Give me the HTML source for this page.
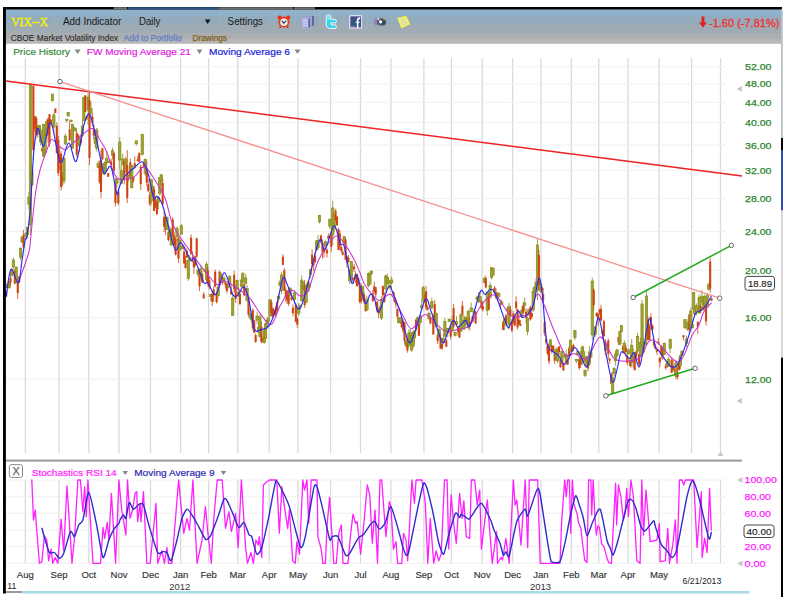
<!DOCTYPE html>
<html><head><meta charset="utf-8">
<style>
html,body{margin:0;padding:0;background:#fff;width:789px;height:597px;overflow:hidden}
svg{display:block}
text{font-family:"Liberation Sans",sans-serif}
.ax{font-size:9.3px;fill:#2f852f;stroke:#2f852f;stroke-width:0.25px}
.sax{font-size:9.7px;fill:#ff22ff;stroke:#ff22ff;stroke-width:0.25px}
.mo{font-size:9.5px;fill:#333;stroke:#333;stroke-width:0.15px}
</style></head><body>
<svg width="789" height="597" viewBox="0 0 789 597">
<defs>
<linearGradient id="tb" x1="0" y1="9.6" x2="0" y2="43.8" gradientUnits="userSpaceOnUse">
<stop offset="0" stop-color="#a6c8e4"/>
<stop offset="0.026" stop-color="#90b2cd"/>
<stop offset="0.18" stop-color="#8fb0ca"/>
<stop offset="0.185" stop-color="#93acbf"/>
<stop offset="0.41" stop-color="#95abbb"/>
<stop offset="0.415" stop-color="#9eaab4"/>
<stop offset="0.68" stop-color="#a1abb3"/>
<stop offset="0.685" stop-color="#aaaeb1"/>
<stop offset="0.85" stop-color="#acaeb0"/>
<stop offset="0.855" stop-color="#b6b6b6"/>
<stop offset="1" stop-color="#b8b8b8"/>
</linearGradient>
</defs>
<rect x="0" y="0" width="789" height="597" fill="#fff"/>
<!-- toolbar -->
<rect x="5" y="9.5" width="776.5" height="34.3" fill="url(#tb)"/>
<rect x="3" y="7" width="779" height="2.6" fill="#000"/>
<rect x="113.6" y="7.2" width="13.4" height="2.2" fill="#707070"/>
<rect x="128" y="7.2" width="90.8" height="2.2" fill="#2a5585"/>
<rect x="218.8" y="7.2" width="74.2" height="2.2" fill="#6c6c6c"/>
<rect x="294" y="7.2" width="21" height="2.2" fill="#6c6c6c"/>
<!-- grid -->
<line x1="25.3" y1="58" x2="25.3" y2="453" stroke="#d9d9d9" stroke-width="1.25"/>
<line x1="25.3" y1="480" x2="25.3" y2="564" stroke="#d9d9d9" stroke-width="1.25"/>
<line x1="59" y1="58" x2="59" y2="453" stroke="#d9d9d9" stroke-width="1.25"/>
<line x1="59" y1="480" x2="59" y2="564" stroke="#d9d9d9" stroke-width="1.25"/>
<line x1="88.8" y1="58" x2="88.8" y2="453" stroke="#d9d9d9" stroke-width="1.25"/>
<line x1="88.8" y1="480" x2="88.8" y2="564" stroke="#d9d9d9" stroke-width="1.25"/>
<line x1="119" y1="58" x2="119" y2="453" stroke="#d9d9d9" stroke-width="1.25"/>
<line x1="119" y1="480" x2="119" y2="564" stroke="#d9d9d9" stroke-width="1.25"/>
<line x1="150.5" y1="58" x2="150.5" y2="453" stroke="#d9d9d9" stroke-width="1.25"/>
<line x1="150.5" y1="480" x2="150.5" y2="564" stroke="#d9d9d9" stroke-width="1.25"/>
<line x1="180.6" y1="58" x2="180.6" y2="453" stroke="#d9d9d9" stroke-width="1.25"/>
<line x1="180.6" y1="480" x2="180.6" y2="564" stroke="#d9d9d9" stroke-width="1.25"/>
<line x1="208.6" y1="58" x2="208.6" y2="453" stroke="#d9d9d9" stroke-width="1.25"/>
<line x1="208.6" y1="480" x2="208.6" y2="564" stroke="#d9d9d9" stroke-width="1.25"/>
<line x1="237.8" y1="58" x2="237.8" y2="453" stroke="#d9d9d9" stroke-width="1.25"/>
<line x1="237.8" y1="480" x2="237.8" y2="564" stroke="#d9d9d9" stroke-width="1.25"/>
<line x1="269.2" y1="58" x2="269.2" y2="453" stroke="#d9d9d9" stroke-width="1.25"/>
<line x1="269.2" y1="480" x2="269.2" y2="564" stroke="#d9d9d9" stroke-width="1.25"/>
<line x1="298" y1="58" x2="298" y2="453" stroke="#d9d9d9" stroke-width="1.25"/>
<line x1="298" y1="480" x2="298" y2="564" stroke="#d9d9d9" stroke-width="1.25"/>
<line x1="330.6" y1="58" x2="330.6" y2="453" stroke="#d9d9d9" stroke-width="1.25"/>
<line x1="330.6" y1="480" x2="330.6" y2="564" stroke="#d9d9d9" stroke-width="1.25"/>
<line x1="360.5" y1="58" x2="360.5" y2="453" stroke="#d9d9d9" stroke-width="1.25"/>
<line x1="360.5" y1="480" x2="360.5" y2="564" stroke="#d9d9d9" stroke-width="1.25"/>
<line x1="390.9" y1="58" x2="390.9" y2="453" stroke="#d9d9d9" stroke-width="1.25"/>
<line x1="390.9" y1="480" x2="390.9" y2="564" stroke="#d9d9d9" stroke-width="1.25"/>
<line x1="423.9" y1="58" x2="423.9" y2="453" stroke="#d9d9d9" stroke-width="1.25"/>
<line x1="423.9" y1="480" x2="423.9" y2="564" stroke="#d9d9d9" stroke-width="1.25"/>
<line x1="451.4" y1="58" x2="451.4" y2="453" stroke="#d9d9d9" stroke-width="1.25"/>
<line x1="451.4" y1="480" x2="451.4" y2="564" stroke="#d9d9d9" stroke-width="1.25"/>
<line x1="482.2" y1="58" x2="482.2" y2="453" stroke="#d9d9d9" stroke-width="1.25"/>
<line x1="482.2" y1="480" x2="482.2" y2="564" stroke="#d9d9d9" stroke-width="1.25"/>
<line x1="512.6" y1="58" x2="512.6" y2="453" stroke="#d9d9d9" stroke-width="1.25"/>
<line x1="512.6" y1="480" x2="512.6" y2="564" stroke="#d9d9d9" stroke-width="1.25"/>
<line x1="541" y1="58" x2="541" y2="453" stroke="#d9d9d9" stroke-width="1.25"/>
<line x1="541" y1="480" x2="541" y2="564" stroke="#d9d9d9" stroke-width="1.25"/>
<line x1="571.3" y1="58" x2="571.3" y2="453" stroke="#d9d9d9" stroke-width="1.25"/>
<line x1="571.3" y1="480" x2="571.3" y2="564" stroke="#d9d9d9" stroke-width="1.25"/>
<line x1="598.8" y1="58" x2="598.8" y2="453" stroke="#d9d9d9" stroke-width="1.25"/>
<line x1="598.8" y1="480" x2="598.8" y2="564" stroke="#d9d9d9" stroke-width="1.25"/>
<line x1="628" y1="58" x2="628" y2="453" stroke="#d9d9d9" stroke-width="1.25"/>
<line x1="628" y1="480" x2="628" y2="564" stroke="#d9d9d9" stroke-width="1.25"/>
<line x1="659.1" y1="58" x2="659.1" y2="453" stroke="#d9d9d9" stroke-width="1.25"/>
<line x1="659.1" y1="480" x2="659.1" y2="564" stroke="#d9d9d9" stroke-width="1.25"/>
<line x1="691.6" y1="58" x2="691.6" y2="453" stroke="#d9d9d9" stroke-width="1.25"/>
<line x1="691.6" y1="480" x2="691.6" y2="564" stroke="#d9d9d9" stroke-width="1.25"/>
<line x1="720.5" y1="58" x2="720.5" y2="453" stroke="#d9d9d9" stroke-width="1.25"/>
<line x1="720.5" y1="480" x2="720.5" y2="564" stroke="#d9d9d9" stroke-width="1.25"/>
<line x1="6" y1="66.7" x2="726" y2="66.7" stroke="#f0f0f0" stroke-width="1"/>
<line x1="6" y1="83.7" x2="726" y2="83.7" stroke="#f0f0f0" stroke-width="1"/>
<line x1="6" y1="102.3" x2="726" y2="102.3" stroke="#f0f0f0" stroke-width="1"/>
<line x1="6" y1="122.6" x2="726" y2="122.6" stroke="#f0f0f0" stroke-width="1"/>
<line x1="6" y1="145.0" x2="726" y2="145.0" stroke="#f0f0f0" stroke-width="1"/>
<line x1="6" y1="170.1" x2="726" y2="170.1" stroke="#f0f0f0" stroke-width="1"/>
<line x1="6" y1="198.6" x2="726" y2="198.6" stroke="#f0f0f0" stroke-width="1"/>
<line x1="6" y1="231.4" x2="726" y2="231.4" stroke="#f0f0f0" stroke-width="1"/>
<line x1="6" y1="270.2" x2="726" y2="270.2" stroke="#f0f0f0" stroke-width="1"/>
<line x1="6" y1="317.8" x2="726" y2="317.8" stroke="#f0f0f0" stroke-width="1"/>
<line x1="6" y1="379.0" x2="726" y2="379.0" stroke="#f0f0f0" stroke-width="1"/>
<line x1="6" y1="480.0" x2="726" y2="480.0" stroke="#f0f0f0" stroke-width="1"/>
<line x1="6" y1="496.7" x2="726" y2="496.7" stroke="#f0f0f0" stroke-width="1"/>
<line x1="6" y1="513.3" x2="726" y2="513.3" stroke="#f0f0f0" stroke-width="1"/>
<line x1="6" y1="530.0" x2="726" y2="530.0" stroke="#f0f0f0" stroke-width="1"/>
<line x1="6" y1="546.6" x2="726" y2="546.6" stroke="#f0f0f0" stroke-width="1"/>
<line x1="6" y1="563.3" x2="726" y2="563.3" stroke="#f0f0f0" stroke-width="1"/>
<!-- candles -->
<g shape-rendering="auto">
<line x1="6.15" y1="290.6" x2="6.15" y2="297.2" stroke="#cf4510" stroke-width="0.8"/>
<rect x="5.10" y="291.1" width="2.1" height="5.4" fill="#cf4510"/>
<line x1="7.60" y1="283.5" x2="7.60" y2="287.8" stroke="#878c16" stroke-width="0.8"/>
<rect x="6.45" y="284.2" width="2.3" height="3.5" fill="#9ea236" stroke="#878c16" stroke-width="0.7"/>
<line x1="9.05" y1="281.3" x2="9.05" y2="288.7" stroke="#878c16" stroke-width="0.8"/>
<rect x="7.90" y="281.9" width="2.3" height="5.9" fill="#9ea236" stroke="#878c16" stroke-width="0.7"/>
<line x1="10.50" y1="272.8" x2="10.50" y2="286.1" stroke="#cf4510" stroke-width="0.8"/>
<rect x="9.45" y="277.8" width="2.1" height="4.8" fill="#cf4510"/>
<line x1="11.95" y1="268.1" x2="11.95" y2="276.7" stroke="#878c16" stroke-width="0.8"/>
<rect x="10.80" y="269.7" width="2.3" height="5.7" fill="#9ea236" stroke="#878c16" stroke-width="0.7"/>
<line x1="13.40" y1="257.7" x2="13.40" y2="268.9" stroke="#878c16" stroke-width="0.8"/>
<rect x="12.25" y="260.0" width="2.3" height="7.0" fill="#9ea236" stroke="#878c16" stroke-width="0.7"/>
<line x1="14.85" y1="268.7" x2="14.85" y2="284.4" stroke="#cf4510" stroke-width="0.8"/>
<rect x="13.80" y="270.7" width="2.1" height="12.8" fill="#cf4510"/>
<line x1="16.30" y1="266.5" x2="16.30" y2="283.3" stroke="#878c16" stroke-width="0.8"/>
<rect x="15.15" y="267.1" width="2.3" height="14.7" fill="#9ea236" stroke="#878c16" stroke-width="0.7"/>
<line x1="17.75" y1="280.8" x2="17.75" y2="299.0" stroke="#cf4510" stroke-width="0.8"/>
<rect x="16.70" y="282.6" width="2.1" height="10.5" fill="#cf4510"/>
<line x1="19.20" y1="275.8" x2="19.20" y2="282.7" stroke="#cf4510" stroke-width="0.8"/>
<rect x="18.15" y="276.5" width="2.1" height="6.1" fill="#cf4510"/>
<line x1="20.65" y1="247.1" x2="20.65" y2="260.5" stroke="#878c16" stroke-width="0.8"/>
<rect x="19.50" y="248.6" width="2.3" height="8.8" fill="#9ea236" stroke="#878c16" stroke-width="0.7"/>
<line x1="22.10" y1="236.9" x2="22.10" y2="242.8" stroke="#878c16" stroke-width="0.8"/>
<rect x="20.95" y="236.9" width="2.3" height="5.1" fill="#9ea236" stroke="#878c16" stroke-width="0.7"/>
<line x1="23.55" y1="229.8" x2="23.55" y2="247.6" stroke="#cf4510" stroke-width="0.8"/>
<rect x="22.50" y="234.8" width="2.1" height="12.6" fill="#cf4510"/>
<line x1="26.03" y1="231.8" x2="26.03" y2="236.8" stroke="#878c16" stroke-width="0.8"/>
<rect x="24.88" y="233.4" width="2.3" height="3.1" fill="#9ea236" stroke="#878c16" stroke-width="0.7"/>
<line x1="27.50" y1="227.2" x2="27.50" y2="237.8" stroke="#878c16" stroke-width="0.8"/>
<rect x="26.35" y="227.3" width="2.3" height="7.4" fill="#9ea236" stroke="#878c16" stroke-width="0.7"/>
<line x1="28.96" y1="192.0" x2="28.96" y2="209.0" stroke="#878c16" stroke-width="0.8"/>
<rect x="27.81" y="196.9" width="2.3" height="7.2" fill="#9ea236" stroke="#878c16" stroke-width="0.7"/>
<line x1="30.43" y1="84.5" x2="30.43" y2="235.0" stroke="#878c16" stroke-width="0.8"/>
<rect x="29.28" y="85.5" width="2.3" height="139.5" fill="#9ea236" stroke="#878c16" stroke-width="0.7"/>
<line x1="31.89" y1="164.5" x2="31.89" y2="185.6" stroke="#878c16" stroke-width="0.8"/>
<rect x="30.74" y="171.7" width="2.3" height="13.3" fill="#9ea236" stroke="#878c16" stroke-width="0.7"/>
<line x1="33.36" y1="84.5" x2="33.36" y2="160.0" stroke="#cf4510" stroke-width="0.8"/>
<rect x="32.31" y="86.0" width="2.1" height="64.0" fill="#cf4510"/>
<line x1="34.82" y1="116.4" x2="34.82" y2="132.0" stroke="#cf4510" stroke-width="0.8"/>
<rect x="33.77" y="116.4" width="2.1" height="12.4" fill="#cf4510"/>
<line x1="36.29" y1="116.1" x2="36.29" y2="136.3" stroke="#cf4510" stroke-width="0.8"/>
<rect x="35.24" y="118.1" width="2.1" height="17.0" fill="#cf4510"/>
<line x1="37.75" y1="125.6" x2="37.75" y2="137.7" stroke="#cf4510" stroke-width="0.8"/>
<rect x="36.70" y="128.2" width="2.1" height="6.1" fill="#cf4510"/>
<line x1="39.22" y1="124.8" x2="39.22" y2="134.0" stroke="#878c16" stroke-width="0.8"/>
<rect x="38.07" y="125.6" width="2.3" height="7.6" fill="#9ea236" stroke="#878c16" stroke-width="0.7"/>
<line x1="40.68" y1="127.6" x2="40.68" y2="145.4" stroke="#878c16" stroke-width="0.8"/>
<rect x="39.53" y="130.5" width="2.3" height="11.4" fill="#9ea236" stroke="#878c16" stroke-width="0.7"/>
<line x1="42.15" y1="146.6" x2="42.15" y2="151.4" stroke="#cf4510" stroke-width="0.8"/>
<rect x="41.10" y="148.8" width="2.1" height="2.4" fill="#cf4510"/>
<line x1="43.62" y1="124.0" x2="43.62" y2="157.0" stroke="#878c16" stroke-width="0.8"/>
<rect x="42.47" y="124.6" width="2.3" height="31.6" fill="#9ea236" stroke="#878c16" stroke-width="0.7"/>
<line x1="45.08" y1="128.8" x2="45.08" y2="153.7" stroke="#878c16" stroke-width="0.8"/>
<rect x="43.93" y="135.2" width="2.3" height="17.5" fill="#9ea236" stroke="#878c16" stroke-width="0.7"/>
<line x1="46.55" y1="119.7" x2="46.55" y2="137.1" stroke="#878c16" stroke-width="0.8"/>
<rect x="45.40" y="121.8" width="2.3" height="13.3" fill="#9ea236" stroke="#878c16" stroke-width="0.7"/>
<line x1="48.01" y1="117.4" x2="48.01" y2="142.7" stroke="#cf4510" stroke-width="0.8"/>
<rect x="46.96" y="119.1" width="2.1" height="15.6" fill="#cf4510"/>
<line x1="49.48" y1="114.0" x2="49.48" y2="146.7" stroke="#cf4510" stroke-width="0.8"/>
<rect x="48.43" y="114.3" width="2.1" height="29.2" fill="#cf4510"/>
<line x1="50.94" y1="119.1" x2="50.94" y2="125.5" stroke="#cf4510" stroke-width="0.8"/>
<rect x="49.89" y="119.8" width="2.1" height="2.3" fill="#cf4510"/>
<line x1="52.41" y1="100.7" x2="52.41" y2="94.9" stroke="#878c16" stroke-width="0.8"/>
<rect x="51.26" y="94.1" width="2.3" height="6.7" fill="#9ea236" stroke="#878c16" stroke-width="0.7"/>
<line x1="53.87" y1="112.9" x2="53.87" y2="132.9" stroke="#878c16" stroke-width="0.8"/>
<rect x="52.72" y="115.0" width="2.3" height="12.0" fill="#9ea236" stroke="#878c16" stroke-width="0.7"/>
<line x1="55.34" y1="113.1" x2="55.34" y2="110.2" stroke="#cf4510" stroke-width="0.8"/>
<rect x="54.29" y="108.5" width="2.1" height="4.6" fill="#cf4510"/>
<line x1="56.80" y1="122.4" x2="56.80" y2="153.5" stroke="#cf4510" stroke-width="0.8"/>
<rect x="55.75" y="125.7" width="2.1" height="27.4" fill="#cf4510"/>
<line x1="58.27" y1="135.8" x2="58.27" y2="175.9" stroke="#cf4510" stroke-width="0.8"/>
<rect x="57.22" y="140.0" width="2.1" height="33.2" fill="#cf4510"/>
<line x1="59.71" y1="147.1" x2="59.71" y2="170.3" stroke="#cf4510" stroke-width="0.8"/>
<rect x="58.66" y="153.7" width="2.1" height="8.8" fill="#cf4510"/>
<line x1="61.13" y1="151.2" x2="61.13" y2="190.4" stroke="#cf4510" stroke-width="0.8"/>
<rect x="60.08" y="153.9" width="2.1" height="33.1" fill="#cf4510"/>
<line x1="62.55" y1="172.3" x2="62.55" y2="185.7" stroke="#cf4510" stroke-width="0.8"/>
<rect x="61.50" y="176.1" width="2.1" height="5.3" fill="#cf4510"/>
<line x1="63.97" y1="157.4" x2="63.97" y2="184.4" stroke="#878c16" stroke-width="0.8"/>
<rect x="62.82" y="158.3" width="2.3" height="22.8" fill="#9ea236" stroke="#878c16" stroke-width="0.7"/>
<line x1="65.39" y1="133.6" x2="65.39" y2="145.0" stroke="#878c16" stroke-width="0.8"/>
<rect x="64.24" y="136.0" width="2.3" height="7.9" fill="#9ea236" stroke="#878c16" stroke-width="0.7"/>
<line x1="66.80" y1="119.2" x2="66.80" y2="122.5" stroke="#878c16" stroke-width="0.8"/>
<rect x="65.65" y="119.2" width="2.3" height="1.2" fill="#9ea236" stroke="#878c16" stroke-width="0.7"/>
<line x1="68.22" y1="116.0" x2="68.22" y2="112.9" stroke="#878c16" stroke-width="0.8"/>
<rect x="67.07" y="112.3" width="2.3" height="3.7" fill="#9ea236" stroke="#878c16" stroke-width="0.7"/>
<line x1="69.64" y1="121.1" x2="69.64" y2="141.3" stroke="#cf4510" stroke-width="0.8"/>
<rect x="68.59" y="129.3" width="2.1" height="10.8" fill="#cf4510"/>
<line x1="71.06" y1="120.7" x2="71.06" y2="122.1" stroke="#878c16" stroke-width="0.8"/>
<rect x="69.91" y="120.1" width="2.3" height="1.2" fill="#9ea236" stroke="#878c16" stroke-width="0.7"/>
<line x1="72.48" y1="124.2" x2="72.48" y2="148.4" stroke="#878c16" stroke-width="0.8"/>
<rect x="71.33" y="124.2" width="2.3" height="24.0" fill="#9ea236" stroke="#878c16" stroke-width="0.7"/>
<line x1="73.90" y1="127.7" x2="73.90" y2="127.6" stroke="#878c16" stroke-width="0.8"/>
<rect x="72.75" y="127.4" width="2.3" height="1.2" fill="#9ea236" stroke="#878c16" stroke-width="0.7"/>
<line x1="75.32" y1="131.1" x2="75.32" y2="130.9" stroke="#878c16" stroke-width="0.8"/>
<rect x="74.17" y="128.4" width="2.3" height="2.7" fill="#9ea236" stroke="#878c16" stroke-width="0.7"/>
<line x1="76.74" y1="130.8" x2="76.74" y2="157.4" stroke="#cf4510" stroke-width="0.8"/>
<rect x="75.69" y="133.1" width="2.1" height="21.5" fill="#cf4510"/>
<line x1="78.16" y1="134.6" x2="78.16" y2="140.1" stroke="#cf4510" stroke-width="0.8"/>
<rect x="77.11" y="134.7" width="2.1" height="3.7" fill="#cf4510"/>
<line x1="79.58" y1="137.3" x2="79.58" y2="152.2" stroke="#878c16" stroke-width="0.8"/>
<rect x="78.43" y="138.9" width="2.3" height="7.0" fill="#9ea236" stroke="#878c16" stroke-width="0.7"/>
<line x1="81.00" y1="134.1" x2="81.00" y2="144.1" stroke="#cf4510" stroke-width="0.8"/>
<rect x="79.95" y="139.0" width="2.1" height="3.8" fill="#cf4510"/>
<line x1="82.41" y1="120.3" x2="82.41" y2="137.7" stroke="#878c16" stroke-width="0.8"/>
<rect x="81.26" y="126.0" width="2.3" height="9.6" fill="#9ea236" stroke="#878c16" stroke-width="0.7"/>
<line x1="83.83" y1="97.3" x2="83.83" y2="121.3" stroke="#878c16" stroke-width="0.8"/>
<rect x="82.68" y="97.3" width="2.3" height="23.4" fill="#9ea236" stroke="#878c16" stroke-width="0.7"/>
<line x1="85.25" y1="95.3" x2="85.25" y2="112.1" stroke="#cf4510" stroke-width="0.8"/>
<rect x="84.20" y="95.3" width="2.1" height="16.7" fill="#cf4510"/>
<line x1="86.67" y1="115.8" x2="86.67" y2="120.1" stroke="#cf4510" stroke-width="0.8"/>
<rect x="85.62" y="116.0" width="2.1" height="2.9" fill="#cf4510"/>
<line x1="88.09" y1="93.0" x2="88.09" y2="125.0" stroke="#878c16" stroke-width="0.8"/>
<rect x="86.94" y="97.0" width="2.3" height="13.0" fill="#9ea236" stroke="#878c16" stroke-width="0.7"/>
<line x1="89.52" y1="90.0" x2="89.52" y2="165.0" stroke="#cf4510" stroke-width="0.8"/>
<rect x="88.47" y="100.0" width="2.1" height="58.0" fill="#cf4510"/>
<line x1="90.96" y1="101.8" x2="90.96" y2="115.1" stroke="#878c16" stroke-width="0.8"/>
<rect x="89.81" y="108.6" width="2.3" height="4.3" fill="#9ea236" stroke="#878c16" stroke-width="0.7"/>
<line x1="92.40" y1="113.1" x2="92.40" y2="126.4" stroke="#cf4510" stroke-width="0.8"/>
<rect x="91.35" y="116.7" width="2.1" height="6.1" fill="#cf4510"/>
<line x1="93.83" y1="124.5" x2="93.83" y2="139.5" stroke="#cf4510" stroke-width="0.8"/>
<rect x="92.78" y="128.8" width="2.1" height="7.0" fill="#cf4510"/>
<line x1="95.27" y1="136.4" x2="95.27" y2="146.9" stroke="#878c16" stroke-width="0.8"/>
<rect x="94.12" y="137.7" width="2.3" height="5.7" fill="#9ea236" stroke="#878c16" stroke-width="0.7"/>
<line x1="96.71" y1="128.0" x2="96.71" y2="151.5" stroke="#878c16" stroke-width="0.8"/>
<rect x="95.56" y="129.9" width="2.3" height="18.2" fill="#9ea236" stroke="#878c16" stroke-width="0.7"/>
<line x1="98.15" y1="160.7" x2="98.15" y2="168.1" stroke="#878c16" stroke-width="0.8"/>
<rect x="97.00" y="163.6" width="2.3" height="3.8" fill="#9ea236" stroke="#878c16" stroke-width="0.7"/>
<line x1="99.59" y1="160.5" x2="99.59" y2="183.8" stroke="#cf4510" stroke-width="0.8"/>
<rect x="98.54" y="165.2" width="2.1" height="16.8" fill="#cf4510"/>
<line x1="101.02" y1="150.0" x2="101.02" y2="198.0" stroke="#cf4510" stroke-width="0.8"/>
<rect x="99.97" y="160.0" width="2.1" height="32.0" fill="#cf4510"/>
<line x1="102.46" y1="147.6" x2="102.46" y2="160.0" stroke="#cf4510" stroke-width="0.8"/>
<rect x="101.41" y="148.3" width="2.1" height="10.8" fill="#cf4510"/>
<line x1="103.90" y1="162.8" x2="103.90" y2="175.0" stroke="#878c16" stroke-width="0.8"/>
<rect x="102.75" y="163.7" width="2.3" height="10.3" fill="#9ea236" stroke="#878c16" stroke-width="0.7"/>
<line x1="105.34" y1="162.0" x2="105.34" y2="173.9" stroke="#878c16" stroke-width="0.8"/>
<rect x="104.19" y="162.1" width="2.3" height="9.3" fill="#9ea236" stroke="#878c16" stroke-width="0.7"/>
<line x1="106.78" y1="151.1" x2="106.78" y2="164.6" stroke="#878c16" stroke-width="0.8"/>
<rect x="105.63" y="158.3" width="2.3" height="4.4" fill="#9ea236" stroke="#878c16" stroke-width="0.7"/>
<line x1="108.21" y1="172.9" x2="108.21" y2="176.7" stroke="#cf4510" stroke-width="0.8"/>
<rect x="107.16" y="173.1" width="2.1" height="3.6" fill="#cf4510"/>
<line x1="109.65" y1="160.6" x2="109.65" y2="162.7" stroke="#878c16" stroke-width="0.8"/>
<rect x="108.50" y="161.0" width="2.3" height="1.7" fill="#9ea236" stroke="#878c16" stroke-width="0.7"/>
<line x1="111.09" y1="158.6" x2="111.09" y2="165.4" stroke="#cf4510" stroke-width="0.8"/>
<rect x="110.04" y="161.6" width="2.1" height="3.4" fill="#cf4510"/>
<line x1="112.53" y1="147.6" x2="112.53" y2="159.5" stroke="#878c16" stroke-width="0.8"/>
<rect x="111.38" y="150.7" width="2.3" height="4.8" fill="#9ea236" stroke="#878c16" stroke-width="0.7"/>
<line x1="113.97" y1="152.8" x2="113.97" y2="174.6" stroke="#cf4510" stroke-width="0.8"/>
<rect x="112.92" y="152.8" width="2.1" height="17.9" fill="#cf4510"/>
<line x1="115.40" y1="178.2" x2="115.40" y2="206.5" stroke="#cf4510" stroke-width="0.8"/>
<rect x="114.35" y="182.2" width="2.1" height="20.9" fill="#cf4510"/>
<line x1="116.84" y1="176.3" x2="116.84" y2="187.6" stroke="#878c16" stroke-width="0.8"/>
<rect x="115.69" y="179.6" width="2.3" height="3.5" fill="#9ea236" stroke="#878c16" stroke-width="0.7"/>
<line x1="118.28" y1="190.7" x2="118.28" y2="205.2" stroke="#cf4510" stroke-width="0.8"/>
<rect x="117.23" y="191.6" width="2.1" height="11.6" fill="#cf4510"/>
<line x1="119.75" y1="137.0" x2="119.75" y2="170.0" stroke="#878c16" stroke-width="0.8"/>
<rect x="118.60" y="142.0" width="2.3" height="18.0" fill="#9ea236" stroke="#878c16" stroke-width="0.7"/>
<line x1="121.25" y1="164.4" x2="121.25" y2="183.4" stroke="#878c16" stroke-width="0.8"/>
<rect x="120.10" y="170.7" width="2.3" height="12.7" fill="#9ea236" stroke="#878c16" stroke-width="0.7"/>
<line x1="122.75" y1="153.6" x2="122.75" y2="165.8" stroke="#878c16" stroke-width="0.8"/>
<rect x="121.60" y="158.9" width="2.3" height="5.0" fill="#9ea236" stroke="#878c16" stroke-width="0.7"/>
<line x1="124.25" y1="159.7" x2="124.25" y2="184.4" stroke="#cf4510" stroke-width="0.8"/>
<rect x="123.20" y="161.3" width="2.1" height="18.5" fill="#cf4510"/>
<line x1="125.75" y1="156.7" x2="125.75" y2="173.2" stroke="#878c16" stroke-width="0.8"/>
<rect x="124.60" y="159.1" width="2.3" height="9.6" fill="#9ea236" stroke="#878c16" stroke-width="0.7"/>
<line x1="127.25" y1="150.0" x2="127.25" y2="203.0" stroke="#cf4510" stroke-width="0.8"/>
<rect x="126.20" y="165.0" width="2.1" height="33.0" fill="#cf4510"/>
<line x1="128.75" y1="174.7" x2="128.75" y2="181.5" stroke="#878c16" stroke-width="0.8"/>
<rect x="127.60" y="175.3" width="2.3" height="1.9" fill="#9ea236" stroke="#878c16" stroke-width="0.7"/>
<line x1="130.25" y1="158.4" x2="130.25" y2="176.6" stroke="#cf4510" stroke-width="0.8"/>
<rect x="129.20" y="162.2" width="2.1" height="13.7" fill="#cf4510"/>
<line x1="131.75" y1="164.9" x2="131.75" y2="188.0" stroke="#878c16" stroke-width="0.8"/>
<rect x="130.60" y="165.5" width="2.3" height="22.3" fill="#9ea236" stroke="#878c16" stroke-width="0.7"/>
<line x1="133.25" y1="176.7" x2="133.25" y2="182.8" stroke="#cf4510" stroke-width="0.8"/>
<rect x="132.20" y="177.0" width="2.1" height="3.8" fill="#cf4510"/>
<line x1="134.75" y1="156.4" x2="134.75" y2="168.7" stroke="#cf4510" stroke-width="0.8"/>
<rect x="133.70" y="163.3" width="2.1" height="4.4" fill="#cf4510"/>
<line x1="136.25" y1="140.2" x2="136.25" y2="145.7" stroke="#878c16" stroke-width="0.8"/>
<rect x="135.10" y="140.9" width="2.3" height="2.8" fill="#9ea236" stroke="#878c16" stroke-width="0.7"/>
<line x1="137.75" y1="155.7" x2="137.75" y2="161.3" stroke="#cf4510" stroke-width="0.8"/>
<rect x="136.70" y="159.4" width="2.1" height="1.7" fill="#cf4510"/>
<line x1="139.25" y1="152.7" x2="139.25" y2="162.0" stroke="#cf4510" stroke-width="0.8"/>
<rect x="138.20" y="152.8" width="2.1" height="9.0" fill="#cf4510"/>
<line x1="140.75" y1="164.8" x2="140.75" y2="190.0" stroke="#cf4510" stroke-width="0.8"/>
<rect x="139.70" y="166.5" width="2.1" height="17.6" fill="#cf4510"/>
<line x1="142.25" y1="134.2" x2="142.25" y2="155.7" stroke="#878c16" stroke-width="0.8"/>
<rect x="141.10" y="134.2" width="2.3" height="20.1" fill="#9ea236" stroke="#878c16" stroke-width="0.7"/>
<line x1="143.75" y1="161.7" x2="143.75" y2="168.1" stroke="#cf4510" stroke-width="0.8"/>
<rect x="142.70" y="163.1" width="2.1" height="3.0" fill="#cf4510"/>
<line x1="145.25" y1="158.4" x2="145.25" y2="175.8" stroke="#878c16" stroke-width="0.8"/>
<rect x="144.10" y="159.6" width="2.3" height="13.7" fill="#9ea236" stroke="#878c16" stroke-width="0.7"/>
<line x1="146.75" y1="161.0" x2="146.75" y2="186.0" stroke="#cf4510" stroke-width="0.8"/>
<rect x="145.70" y="167.7" width="2.1" height="14.8" fill="#cf4510"/>
<line x1="148.25" y1="179.0" x2="148.25" y2="192.4" stroke="#cf4510" stroke-width="0.8"/>
<rect x="147.20" y="184.3" width="2.1" height="6.6" fill="#cf4510"/>
<line x1="149.75" y1="192.5" x2="149.75" y2="206.0" stroke="#cf4510" stroke-width="0.8"/>
<rect x="148.70" y="195.2" width="2.1" height="8.6" fill="#cf4510"/>
<line x1="151.22" y1="179.2" x2="151.22" y2="205.3" stroke="#878c16" stroke-width="0.8"/>
<rect x="150.07" y="179.5" width="2.3" height="21.7" fill="#9ea236" stroke="#878c16" stroke-width="0.7"/>
<line x1="152.65" y1="185.5" x2="152.65" y2="193.6" stroke="#878c16" stroke-width="0.8"/>
<rect x="151.50" y="186.7" width="2.3" height="5.3" fill="#9ea236" stroke="#878c16" stroke-width="0.7"/>
<line x1="154.08" y1="185.7" x2="154.08" y2="211.0" stroke="#cf4510" stroke-width="0.8"/>
<rect x="153.03" y="189.3" width="2.1" height="21.6" fill="#cf4510"/>
<line x1="155.52" y1="198.2" x2="155.52" y2="207.9" stroke="#cf4510" stroke-width="0.8"/>
<rect x="154.47" y="200.3" width="2.1" height="6.5" fill="#cf4510"/>
<line x1="156.95" y1="198.5" x2="156.95" y2="215.3" stroke="#cf4510" stroke-width="0.8"/>
<rect x="155.90" y="201.5" width="2.1" height="12.4" fill="#cf4510"/>
<line x1="158.38" y1="195.9" x2="158.38" y2="209.1" stroke="#878c16" stroke-width="0.8"/>
<rect x="157.23" y="197.4" width="2.3" height="4.6" fill="#9ea236" stroke="#878c16" stroke-width="0.7"/>
<line x1="159.82" y1="176.9" x2="159.82" y2="195.6" stroke="#878c16" stroke-width="0.8"/>
<rect x="158.67" y="177.5" width="2.3" height="16.0" fill="#9ea236" stroke="#878c16" stroke-width="0.7"/>
<line x1="161.25" y1="174.7" x2="161.25" y2="185.8" stroke="#878c16" stroke-width="0.8"/>
<rect x="160.10" y="174.7" width="2.3" height="6.6" fill="#9ea236" stroke="#878c16" stroke-width="0.7"/>
<line x1="162.68" y1="178.8" x2="162.68" y2="204.8" stroke="#cf4510" stroke-width="0.8"/>
<rect x="161.63" y="183.0" width="2.1" height="21.2" fill="#cf4510"/>
<line x1="164.12" y1="211.4" x2="164.12" y2="232.1" stroke="#cf4510" stroke-width="0.8"/>
<rect x="163.07" y="216.8" width="2.1" height="9.7" fill="#cf4510"/>
<line x1="165.55" y1="214.9" x2="165.55" y2="235.2" stroke="#cf4510" stroke-width="0.8"/>
<rect x="164.50" y="218.1" width="2.1" height="11.3" fill="#cf4510"/>
<line x1="166.98" y1="216.6" x2="166.98" y2="229.9" stroke="#878c16" stroke-width="0.8"/>
<rect x="165.83" y="217.5" width="2.3" height="12.2" fill="#9ea236" stroke="#878c16" stroke-width="0.7"/>
<line x1="168.42" y1="231.3" x2="168.42" y2="241.3" stroke="#cf4510" stroke-width="0.8"/>
<rect x="167.37" y="231.8" width="2.1" height="8.2" fill="#cf4510"/>
<line x1="169.85" y1="225.9" x2="169.85" y2="236.7" stroke="#878c16" stroke-width="0.8"/>
<rect x="168.70" y="229.3" width="2.3" height="6.0" fill="#9ea236" stroke="#878c16" stroke-width="0.7"/>
<line x1="171.28" y1="228.2" x2="171.28" y2="245.3" stroke="#878c16" stroke-width="0.8"/>
<rect x="170.13" y="230.9" width="2.3" height="14.2" fill="#9ea236" stroke="#878c16" stroke-width="0.7"/>
<line x1="172.72" y1="217.2" x2="172.72" y2="236.8" stroke="#cf4510" stroke-width="0.8"/>
<rect x="171.67" y="219.5" width="2.1" height="17.0" fill="#cf4510"/>
<line x1="174.15" y1="232.0" x2="174.15" y2="245.4" stroke="#cf4510" stroke-width="0.8"/>
<rect x="173.10" y="235.6" width="2.1" height="9.4" fill="#cf4510"/>
<line x1="175.58" y1="237.0" x2="175.58" y2="255.4" stroke="#cf4510" stroke-width="0.8"/>
<rect x="174.53" y="239.0" width="2.1" height="15.6" fill="#cf4510"/>
<line x1="177.02" y1="226.4" x2="177.02" y2="241.1" stroke="#878c16" stroke-width="0.8"/>
<rect x="175.87" y="228.2" width="2.3" height="8.4" fill="#9ea236" stroke="#878c16" stroke-width="0.7"/>
<line x1="178.45" y1="236.2" x2="178.45" y2="263.2" stroke="#cf4510" stroke-width="0.8"/>
<rect x="177.40" y="238.3" width="2.1" height="20.4" fill="#cf4510"/>
<line x1="179.88" y1="237.0" x2="179.88" y2="250.8" stroke="#878c16" stroke-width="0.8"/>
<rect x="178.73" y="240.5" width="2.3" height="9.4" fill="#9ea236" stroke="#878c16" stroke-width="0.7"/>
<line x1="181.30" y1="224.0" x2="181.30" y2="234.7" stroke="#878c16" stroke-width="0.8"/>
<rect x="180.15" y="225.7" width="2.3" height="8.5" fill="#9ea236" stroke="#878c16" stroke-width="0.7"/>
<line x1="182.70" y1="245.2" x2="182.70" y2="249.0" stroke="#878c16" stroke-width="0.8"/>
<rect x="181.55" y="246.3" width="2.3" height="2.4" fill="#9ea236" stroke="#878c16" stroke-width="0.7"/>
<line x1="184.10" y1="245.4" x2="184.10" y2="263.5" stroke="#cf4510" stroke-width="0.8"/>
<rect x="183.05" y="251.6" width="2.1" height="11.8" fill="#cf4510"/>
<line x1="185.50" y1="255.8" x2="185.50" y2="268.7" stroke="#cf4510" stroke-width="0.8"/>
<rect x="184.45" y="260.3" width="2.1" height="7.7" fill="#cf4510"/>
<line x1="186.90" y1="248.5" x2="186.90" y2="257.7" stroke="#cf4510" stroke-width="0.8"/>
<rect x="185.85" y="251.1" width="2.1" height="6.6" fill="#cf4510"/>
<line x1="188.30" y1="259.3" x2="188.30" y2="280.9" stroke="#878c16" stroke-width="0.8"/>
<rect x="187.15" y="260.1" width="2.3" height="18.5" fill="#9ea236" stroke="#878c16" stroke-width="0.7"/>
<line x1="189.70" y1="255.0" x2="189.70" y2="261.3" stroke="#878c16" stroke-width="0.8"/>
<rect x="188.55" y="258.0" width="2.3" height="2.8" fill="#9ea236" stroke="#878c16" stroke-width="0.7"/>
<line x1="191.10" y1="234.4" x2="191.10" y2="254.6" stroke="#cf4510" stroke-width="0.8"/>
<rect x="190.05" y="237.6" width="2.1" height="16.6" fill="#cf4510"/>
<line x1="192.50" y1="251.4" x2="192.50" y2="262.1" stroke="#cf4510" stroke-width="0.8"/>
<rect x="191.45" y="257.7" width="2.1" height="2.2" fill="#cf4510"/>
<line x1="193.90" y1="259.7" x2="193.90" y2="273.9" stroke="#cf4510" stroke-width="0.8"/>
<rect x="192.85" y="260.8" width="2.1" height="6.6" fill="#cf4510"/>
<line x1="195.30" y1="256.1" x2="195.30" y2="265.9" stroke="#cf4510" stroke-width="0.8"/>
<rect x="194.25" y="256.2" width="2.1" height="9.5" fill="#cf4510"/>
<line x1="196.70" y1="237.7" x2="196.70" y2="256.9" stroke="#cf4510" stroke-width="0.8"/>
<rect x="195.65" y="238.4" width="2.1" height="18.2" fill="#cf4510"/>
<line x1="198.10" y1="269.9" x2="198.10" y2="276.9" stroke="#878c16" stroke-width="0.8"/>
<rect x="196.95" y="269.9" width="2.3" height="4.2" fill="#9ea236" stroke="#878c16" stroke-width="0.7"/>
<line x1="199.50" y1="269.1" x2="199.50" y2="291.1" stroke="#cf4510" stroke-width="0.8"/>
<rect x="198.45" y="269.5" width="2.1" height="16.9" fill="#cf4510"/>
<line x1="200.90" y1="265.2" x2="200.90" y2="280.9" stroke="#878c16" stroke-width="0.8"/>
<rect x="199.75" y="268.7" width="2.3" height="8.8" fill="#9ea236" stroke="#878c16" stroke-width="0.7"/>
<line x1="202.30" y1="273.3" x2="202.30" y2="282.9" stroke="#cf4510" stroke-width="0.8"/>
<rect x="201.25" y="274.0" width="2.1" height="8.6" fill="#cf4510"/>
<line x1="203.70" y1="292.0" x2="203.70" y2="298.5" stroke="#cf4510" stroke-width="0.8"/>
<rect x="202.65" y="294.4" width="2.1" height="4.0" fill="#cf4510"/>
<line x1="205.10" y1="268.0" x2="205.10" y2="272.5" stroke="#878c16" stroke-width="0.8"/>
<rect x="203.95" y="270.1" width="2.3" height="1.7" fill="#9ea236" stroke="#878c16" stroke-width="0.7"/>
<line x1="206.50" y1="261.6" x2="206.50" y2="282.5" stroke="#878c16" stroke-width="0.8"/>
<rect x="205.35" y="264.2" width="2.3" height="15.2" fill="#9ea236" stroke="#878c16" stroke-width="0.7"/>
<line x1="207.90" y1="266.6" x2="207.90" y2="286.3" stroke="#cf4510" stroke-width="0.8"/>
<rect x="206.85" y="270.1" width="2.1" height="13.1" fill="#cf4510"/>
<line x1="209.33" y1="277.2" x2="209.33" y2="289.4" stroke="#cf4510" stroke-width="0.8"/>
<rect x="208.28" y="280.3" width="2.1" height="6.9" fill="#cf4510"/>
<line x1="210.79" y1="293.8" x2="210.79" y2="301.2" stroke="#878c16" stroke-width="0.8"/>
<rect x="209.64" y="294.4" width="2.3" height="2.1" fill="#9ea236" stroke="#878c16" stroke-width="0.7"/>
<line x1="212.25" y1="291.4" x2="212.25" y2="306.2" stroke="#cf4510" stroke-width="0.8"/>
<rect x="211.20" y="293.9" width="2.1" height="7.9" fill="#cf4510"/>
<line x1="213.71" y1="286.4" x2="213.71" y2="301.9" stroke="#cf4510" stroke-width="0.8"/>
<rect x="212.66" y="289.5" width="2.1" height="6.1" fill="#cf4510"/>
<line x1="215.17" y1="269.4" x2="215.17" y2="287.2" stroke="#cf4510" stroke-width="0.8"/>
<rect x="214.12" y="271.7" width="2.1" height="14.9" fill="#cf4510"/>
<line x1="216.63" y1="291.5" x2="216.63" y2="303.5" stroke="#cf4510" stroke-width="0.8"/>
<rect x="215.58" y="293.1" width="2.1" height="9.2" fill="#cf4510"/>
<line x1="218.09" y1="283.8" x2="218.09" y2="297.9" stroke="#878c16" stroke-width="0.8"/>
<rect x="216.94" y="287.4" width="2.3" height="8.3" fill="#9ea236" stroke="#878c16" stroke-width="0.7"/>
<line x1="219.55" y1="270.6" x2="219.55" y2="287.5" stroke="#cf4510" stroke-width="0.8"/>
<rect x="218.50" y="271.7" width="2.1" height="13.8" fill="#cf4510"/>
<line x1="221.01" y1="272.2" x2="221.01" y2="278.7" stroke="#878c16" stroke-width="0.8"/>
<rect x="219.86" y="274.6" width="2.3" height="2.6" fill="#9ea236" stroke="#878c16" stroke-width="0.7"/>
<line x1="222.47" y1="276.7" x2="222.47" y2="284.8" stroke="#cf4510" stroke-width="0.8"/>
<rect x="221.42" y="277.8" width="2.1" height="4.6" fill="#cf4510"/>
<line x1="223.93" y1="275.6" x2="223.93" y2="283.1" stroke="#878c16" stroke-width="0.8"/>
<rect x="222.78" y="278.2" width="2.3" height="3.9" fill="#9ea236" stroke="#878c16" stroke-width="0.7"/>
<line x1="225.39" y1="281.3" x2="225.39" y2="288.6" stroke="#cf4510" stroke-width="0.8"/>
<rect x="224.34" y="282.9" width="2.1" height="1.8" fill="#cf4510"/>
<line x1="226.85" y1="282.5" x2="226.85" y2="293.3" stroke="#cf4510" stroke-width="0.8"/>
<rect x="225.80" y="283.8" width="2.1" height="7.2" fill="#cf4510"/>
<line x1="228.31" y1="280.1" x2="228.31" y2="288.3" stroke="#878c16" stroke-width="0.8"/>
<rect x="227.16" y="284.2" width="2.3" height="2.9" fill="#9ea236" stroke="#878c16" stroke-width="0.7"/>
<line x1="229.77" y1="275.0" x2="229.77" y2="284.4" stroke="#878c16" stroke-width="0.8"/>
<rect x="228.62" y="276.7" width="2.3" height="7.7" fill="#9ea236" stroke="#878c16" stroke-width="0.7"/>
<line x1="231.23" y1="285.3" x2="231.23" y2="294.6" stroke="#cf4510" stroke-width="0.8"/>
<rect x="230.18" y="290.8" width="2.1" height="3.6" fill="#cf4510"/>
<line x1="232.69" y1="294.7" x2="232.69" y2="315.8" stroke="#878c16" stroke-width="0.8"/>
<rect x="231.54" y="298.2" width="2.3" height="17.2" fill="#9ea236" stroke="#878c16" stroke-width="0.7"/>
<line x1="234.15" y1="270.7" x2="234.15" y2="292.4" stroke="#cf4510" stroke-width="0.8"/>
<rect x="233.10" y="274.8" width="2.1" height="14.3" fill="#cf4510"/>
<line x1="235.61" y1="285.0" x2="235.61" y2="302.8" stroke="#cf4510" stroke-width="0.8"/>
<rect x="234.56" y="288.2" width="2.1" height="10.7" fill="#cf4510"/>
<line x1="237.07" y1="279.4" x2="237.07" y2="289.5" stroke="#878c16" stroke-width="0.8"/>
<rect x="235.92" y="280.6" width="2.3" height="8.1" fill="#9ea236" stroke="#878c16" stroke-width="0.7"/>
<line x1="238.51" y1="287.6" x2="238.51" y2="297.1" stroke="#878c16" stroke-width="0.8"/>
<rect x="237.36" y="292.3" width="2.3" height="3.2" fill="#9ea236" stroke="#878c16" stroke-width="0.7"/>
<line x1="239.94" y1="290.1" x2="239.94" y2="305.1" stroke="#cf4510" stroke-width="0.8"/>
<rect x="238.89" y="294.1" width="2.1" height="9.9" fill="#cf4510"/>
<line x1="241.37" y1="278.2" x2="241.37" y2="288.6" stroke="#878c16" stroke-width="0.8"/>
<rect x="240.22" y="280.0" width="2.3" height="6.3" fill="#9ea236" stroke="#878c16" stroke-width="0.7"/>
<line x1="242.80" y1="272.7" x2="242.80" y2="286.1" stroke="#878c16" stroke-width="0.8"/>
<rect x="241.65" y="273.1" width="2.3" height="8.7" fill="#9ea236" stroke="#878c16" stroke-width="0.7"/>
<line x1="244.22" y1="283.3" x2="244.22" y2="296.2" stroke="#cf4510" stroke-width="0.8"/>
<rect x="243.17" y="284.6" width="2.1" height="10.8" fill="#cf4510"/>
<line x1="245.65" y1="273.9" x2="245.65" y2="284.4" stroke="#878c16" stroke-width="0.8"/>
<rect x="244.50" y="278.0" width="2.3" height="5.4" fill="#9ea236" stroke="#878c16" stroke-width="0.7"/>
<line x1="247.08" y1="285.0" x2="247.08" y2="301.5" stroke="#878c16" stroke-width="0.8"/>
<rect x="245.93" y="288.3" width="2.3" height="12.2" fill="#9ea236" stroke="#878c16" stroke-width="0.7"/>
<line x1="248.50" y1="295.0" x2="248.50" y2="315.0" stroke="#cf4510" stroke-width="0.8"/>
<rect x="247.45" y="299.8" width="2.1" height="15.0" fill="#cf4510"/>
<line x1="249.93" y1="308.5" x2="249.93" y2="318.8" stroke="#878c16" stroke-width="0.8"/>
<rect x="248.78" y="314.5" width="2.3" height="2.8" fill="#9ea236" stroke="#878c16" stroke-width="0.7"/>
<line x1="251.36" y1="313.4" x2="251.36" y2="322.7" stroke="#878c16" stroke-width="0.8"/>
<rect x="250.21" y="316.4" width="2.3" height="3.0" fill="#9ea236" stroke="#878c16" stroke-width="0.7"/>
<line x1="252.79" y1="308.0" x2="252.79" y2="330.5" stroke="#cf4510" stroke-width="0.8"/>
<rect x="251.74" y="310.2" width="2.1" height="18.0" fill="#cf4510"/>
<line x1="254.21" y1="319.9" x2="254.21" y2="333.2" stroke="#cf4510" stroke-width="0.8"/>
<rect x="253.16" y="320.3" width="2.1" height="12.3" fill="#cf4510"/>
<line x1="255.64" y1="333.5" x2="255.64" y2="342.9" stroke="#cf4510" stroke-width="0.8"/>
<rect x="254.59" y="335.0" width="2.1" height="6.9" fill="#cf4510"/>
<line x1="257.07" y1="312.1" x2="257.07" y2="324.1" stroke="#878c16" stroke-width="0.8"/>
<rect x="255.92" y="316.0" width="2.3" height="4.1" fill="#9ea236" stroke="#878c16" stroke-width="0.7"/>
<line x1="258.50" y1="323.3" x2="258.50" y2="332.2" stroke="#878c16" stroke-width="0.8"/>
<rect x="257.35" y="327.6" width="2.3" height="4.5" fill="#9ea236" stroke="#878c16" stroke-width="0.7"/>
<line x1="259.92" y1="314.3" x2="259.92" y2="337.7" stroke="#878c16" stroke-width="0.8"/>
<rect x="258.77" y="316.8" width="2.3" height="19.8" fill="#9ea236" stroke="#878c16" stroke-width="0.7"/>
<line x1="261.35" y1="321.3" x2="261.35" y2="343.2" stroke="#cf4510" stroke-width="0.8"/>
<rect x="260.30" y="326.7" width="2.1" height="15.1" fill="#cf4510"/>
<line x1="262.78" y1="336.7" x2="262.78" y2="342.7" stroke="#cf4510" stroke-width="0.8"/>
<rect x="261.73" y="338.0" width="2.1" height="2.8" fill="#cf4510"/>
<line x1="264.20" y1="327.5" x2="264.20" y2="343.9" stroke="#878c16" stroke-width="0.8"/>
<rect x="263.05" y="330.8" width="2.3" height="11.8" fill="#9ea236" stroke="#878c16" stroke-width="0.7"/>
<line x1="265.63" y1="323.6" x2="265.63" y2="338.6" stroke="#878c16" stroke-width="0.8"/>
<rect x="264.48" y="323.8" width="2.3" height="14.8" fill="#9ea236" stroke="#878c16" stroke-width="0.7"/>
<line x1="267.06" y1="316.7" x2="267.06" y2="328.7" stroke="#878c16" stroke-width="0.8"/>
<rect x="265.91" y="320.2" width="2.3" height="6.7" fill="#9ea236" stroke="#878c16" stroke-width="0.7"/>
<line x1="268.49" y1="316.6" x2="268.49" y2="321.8" stroke="#878c16" stroke-width="0.8"/>
<rect x="267.34" y="318.7" width="2.3" height="2.4" fill="#9ea236" stroke="#878c16" stroke-width="0.7"/>
<line x1="269.92" y1="299.3" x2="269.92" y2="318.3" stroke="#878c16" stroke-width="0.8"/>
<rect x="268.77" y="299.9" width="2.3" height="15.9" fill="#9ea236" stroke="#878c16" stroke-width="0.7"/>
<line x1="271.36" y1="299.6" x2="271.36" y2="316.2" stroke="#cf4510" stroke-width="0.8"/>
<rect x="270.31" y="302.2" width="2.1" height="11.0" fill="#cf4510"/>
<line x1="272.80" y1="307.5" x2="272.80" y2="317.3" stroke="#cf4510" stroke-width="0.8"/>
<rect x="271.75" y="308.3" width="2.1" height="8.6" fill="#cf4510"/>
<line x1="274.24" y1="309.9" x2="274.24" y2="315.2" stroke="#cf4510" stroke-width="0.8"/>
<rect x="273.19" y="310.0" width="2.1" height="4.8" fill="#cf4510"/>
<line x1="275.68" y1="305.9" x2="275.68" y2="317.2" stroke="#cf4510" stroke-width="0.8"/>
<rect x="274.63" y="308.8" width="2.1" height="6.4" fill="#cf4510"/>
<line x1="277.12" y1="301.9" x2="277.12" y2="311.7" stroke="#cf4510" stroke-width="0.8"/>
<rect x="276.07" y="302.2" width="2.1" height="8.7" fill="#cf4510"/>
<line x1="278.56" y1="293.4" x2="278.56" y2="302.5" stroke="#878c16" stroke-width="0.8"/>
<rect x="277.41" y="296.3" width="2.3" height="2.6" fill="#9ea236" stroke="#878c16" stroke-width="0.7"/>
<line x1="280.00" y1="280.2" x2="280.00" y2="286.7" stroke="#878c16" stroke-width="0.8"/>
<rect x="278.85" y="282.0" width="2.3" height="3.6" fill="#9ea236" stroke="#878c16" stroke-width="0.7"/>
<line x1="281.44" y1="272.1" x2="281.44" y2="294.3" stroke="#878c16" stroke-width="0.8"/>
<rect x="280.29" y="274.9" width="2.3" height="16.0" fill="#9ea236" stroke="#878c16" stroke-width="0.7"/>
<line x1="282.88" y1="254.3" x2="282.88" y2="265.1" stroke="#cf4510" stroke-width="0.8"/>
<rect x="281.83" y="256.7" width="2.1" height="8.1" fill="#cf4510"/>
<line x1="284.32" y1="267.9" x2="284.32" y2="290.9" stroke="#cf4510" stroke-width="0.8"/>
<rect x="283.27" y="270.3" width="2.1" height="20.4" fill="#cf4510"/>
<line x1="285.76" y1="287.4" x2="285.76" y2="302.1" stroke="#cf4510" stroke-width="0.8"/>
<rect x="284.71" y="290.4" width="2.1" height="6.9" fill="#cf4510"/>
<line x1="287.20" y1="290.0" x2="287.20" y2="304.1" stroke="#cf4510" stroke-width="0.8"/>
<rect x="286.15" y="291.6" width="2.1" height="8.9" fill="#cf4510"/>
<line x1="288.64" y1="287.9" x2="288.64" y2="306.1" stroke="#cf4510" stroke-width="0.8"/>
<rect x="287.59" y="290.0" width="2.1" height="13.9" fill="#cf4510"/>
<line x1="290.08" y1="287.2" x2="290.08" y2="296.5" stroke="#878c16" stroke-width="0.8"/>
<rect x="288.93" y="288.1" width="2.3" height="7.7" fill="#9ea236" stroke="#878c16" stroke-width="0.7"/>
<line x1="291.52" y1="294.8" x2="291.52" y2="300.8" stroke="#cf4510" stroke-width="0.8"/>
<rect x="290.47" y="297.4" width="2.1" height="2.4" fill="#cf4510"/>
<line x1="292.96" y1="304.4" x2="292.96" y2="316.1" stroke="#cf4510" stroke-width="0.8"/>
<rect x="291.91" y="307.7" width="2.1" height="5.4" fill="#cf4510"/>
<line x1="294.40" y1="290.7" x2="294.40" y2="304.0" stroke="#878c16" stroke-width="0.8"/>
<rect x="293.25" y="293.1" width="2.3" height="6.5" fill="#9ea236" stroke="#878c16" stroke-width="0.7"/>
<line x1="295.84" y1="303.2" x2="295.84" y2="322.2" stroke="#cf4510" stroke-width="0.8"/>
<rect x="294.79" y="304.6" width="2.1" height="17.2" fill="#cf4510"/>
<line x1="297.28" y1="317.1" x2="297.28" y2="327.9" stroke="#cf4510" stroke-width="0.8"/>
<rect x="296.23" y="318.9" width="2.1" height="5.6" fill="#cf4510"/>
<line x1="298.74" y1="303.2" x2="298.74" y2="316.1" stroke="#878c16" stroke-width="0.8"/>
<rect x="297.59" y="307.6" width="2.3" height="5.9" fill="#9ea236" stroke="#878c16" stroke-width="0.7"/>
<line x1="300.22" y1="305.0" x2="300.22" y2="309.7" stroke="#878c16" stroke-width="0.8"/>
<rect x="299.07" y="305.1" width="2.3" height="2.5" fill="#9ea236" stroke="#878c16" stroke-width="0.7"/>
<line x1="301.70" y1="275.1" x2="301.70" y2="300.9" stroke="#878c16" stroke-width="0.8"/>
<rect x="300.55" y="280.1" width="2.3" height="20.8" fill="#9ea236" stroke="#878c16" stroke-width="0.7"/>
<line x1="303.19" y1="281.5" x2="303.19" y2="291.3" stroke="#878c16" stroke-width="0.8"/>
<rect x="302.04" y="281.9" width="2.3" height="6.9" fill="#9ea236" stroke="#878c16" stroke-width="0.7"/>
<line x1="304.67" y1="279.9" x2="304.67" y2="307.9" stroke="#cf4510" stroke-width="0.8"/>
<rect x="303.62" y="284.9" width="2.1" height="20.3" fill="#cf4510"/>
<line x1="306.15" y1="285.0" x2="306.15" y2="302.6" stroke="#878c16" stroke-width="0.8"/>
<rect x="305.00" y="285.3" width="2.3" height="17.2" fill="#9ea236" stroke="#878c16" stroke-width="0.7"/>
<line x1="307.63" y1="280.8" x2="307.63" y2="291.3" stroke="#878c16" stroke-width="0.8"/>
<rect x="306.48" y="283.7" width="2.3" height="7.5" fill="#9ea236" stroke="#878c16" stroke-width="0.7"/>
<line x1="309.11" y1="282.0" x2="309.11" y2="291.5" stroke="#878c16" stroke-width="0.8"/>
<rect x="307.96" y="283.1" width="2.3" height="4.3" fill="#9ea236" stroke="#878c16" stroke-width="0.7"/>
<line x1="310.60" y1="268.5" x2="310.60" y2="278.3" stroke="#878c16" stroke-width="0.8"/>
<rect x="309.45" y="269.7" width="2.3" height="4.6" fill="#9ea236" stroke="#878c16" stroke-width="0.7"/>
<line x1="312.08" y1="249.3" x2="312.08" y2="267.5" stroke="#cf4510" stroke-width="0.8"/>
<rect x="311.03" y="254.6" width="2.1" height="9.3" fill="#cf4510"/>
<line x1="313.56" y1="262.1" x2="313.56" y2="271.2" stroke="#cf4510" stroke-width="0.8"/>
<rect x="312.51" y="262.7" width="2.1" height="2.6" fill="#cf4510"/>
<line x1="315.04" y1="252.0" x2="315.04" y2="263.0" stroke="#cf4510" stroke-width="0.8"/>
<rect x="313.99" y="255.9" width="2.1" height="6.3" fill="#cf4510"/>
<line x1="316.52" y1="240.1" x2="316.52" y2="251.1" stroke="#878c16" stroke-width="0.8"/>
<rect x="315.37" y="240.9" width="2.3" height="8.8" fill="#9ea236" stroke="#878c16" stroke-width="0.7"/>
<line x1="318.00" y1="235.1" x2="318.00" y2="249.6" stroke="#878c16" stroke-width="0.8"/>
<rect x="316.85" y="240.3" width="2.3" height="7.5" fill="#9ea236" stroke="#878c16" stroke-width="0.7"/>
<line x1="319.49" y1="215.3" x2="319.49" y2="223.6" stroke="#878c16" stroke-width="0.8"/>
<rect x="318.34" y="215.4" width="2.3" height="6.4" fill="#9ea236" stroke="#878c16" stroke-width="0.7"/>
<line x1="320.97" y1="234.3" x2="320.97" y2="243.7" stroke="#cf4510" stroke-width="0.8"/>
<rect x="319.92" y="235.7" width="2.1" height="6.3" fill="#cf4510"/>
<line x1="322.45" y1="239.4" x2="322.45" y2="258.6" stroke="#cf4510" stroke-width="0.8"/>
<rect x="321.40" y="242.7" width="2.1" height="9.0" fill="#cf4510"/>
<line x1="323.93" y1="243.3" x2="323.93" y2="257.7" stroke="#cf4510" stroke-width="0.8"/>
<rect x="322.88" y="249.9" width="2.1" height="2.7" fill="#cf4510"/>
<line x1="325.41" y1="240.5" x2="325.41" y2="246.7" stroke="#878c16" stroke-width="0.8"/>
<rect x="324.26" y="241.6" width="2.3" height="4.2" fill="#9ea236" stroke="#878c16" stroke-width="0.7"/>
<line x1="326.90" y1="248.5" x2="326.90" y2="257.5" stroke="#cf4510" stroke-width="0.8"/>
<rect x="325.85" y="249.7" width="2.1" height="3.7" fill="#cf4510"/>
<line x1="328.38" y1="233.2" x2="328.38" y2="240.4" stroke="#cf4510" stroke-width="0.8"/>
<rect x="327.33" y="235.9" width="2.1" height="2.8" fill="#cf4510"/>
<line x1="329.86" y1="219.0" x2="329.86" y2="229.0" stroke="#878c16" stroke-width="0.8"/>
<rect x="328.71" y="219.1" width="2.3" height="7.1" fill="#9ea236" stroke="#878c16" stroke-width="0.7"/>
<line x1="331.31" y1="231.6" x2="331.31" y2="251.9" stroke="#cf4510" stroke-width="0.8"/>
<rect x="330.26" y="233.6" width="2.1" height="13.2" fill="#cf4510"/>
<line x1="332.74" y1="201.0" x2="332.74" y2="245.0" stroke="#878c16" stroke-width="0.8"/>
<rect x="331.59" y="208.0" width="2.3" height="27.0" fill="#9ea236" stroke="#878c16" stroke-width="0.7"/>
<line x1="334.16" y1="214.0" x2="334.16" y2="231.8" stroke="#878c16" stroke-width="0.8"/>
<rect x="333.01" y="214.0" width="2.3" height="14.9" fill="#9ea236" stroke="#878c16" stroke-width="0.7"/>
<line x1="335.58" y1="208.8" x2="335.58" y2="220.8" stroke="#cf4510" stroke-width="0.8"/>
<rect x="334.53" y="210.7" width="2.1" height="9.4" fill="#cf4510"/>
<line x1="337.01" y1="215.8" x2="337.01" y2="225.5" stroke="#cf4510" stroke-width="0.8"/>
<rect x="335.96" y="216.6" width="2.1" height="8.8" fill="#cf4510"/>
<line x1="338.43" y1="227.9" x2="338.43" y2="250.1" stroke="#cf4510" stroke-width="0.8"/>
<rect x="337.38" y="229.3" width="2.1" height="20.6" fill="#cf4510"/>
<line x1="339.85" y1="230.0" x2="339.85" y2="250.3" stroke="#cf4510" stroke-width="0.8"/>
<rect x="338.80" y="233.8" width="2.1" height="12.7" fill="#cf4510"/>
<line x1="341.28" y1="245.7" x2="341.28" y2="253.0" stroke="#cf4510" stroke-width="0.8"/>
<rect x="340.23" y="247.0" width="2.1" height="3.7" fill="#cf4510"/>
<line x1="342.70" y1="249.9" x2="342.70" y2="255.4" stroke="#cf4510" stroke-width="0.8"/>
<rect x="341.65" y="252.2" width="2.1" height="2.5" fill="#cf4510"/>
<line x1="344.13" y1="235.9" x2="344.13" y2="245.4" stroke="#878c16" stroke-width="0.8"/>
<rect x="342.98" y="236.8" width="2.3" height="6.3" fill="#9ea236" stroke="#878c16" stroke-width="0.7"/>
<line x1="345.55" y1="237.5" x2="345.55" y2="259.9" stroke="#cf4510" stroke-width="0.8"/>
<rect x="344.50" y="239.6" width="2.1" height="20.0" fill="#cf4510"/>
<line x1="346.97" y1="255.9" x2="346.97" y2="267.7" stroke="#cf4510" stroke-width="0.8"/>
<rect x="345.92" y="256.8" width="2.1" height="6.3" fill="#cf4510"/>
<line x1="348.40" y1="255.0" x2="348.40" y2="262.4" stroke="#cf4510" stroke-width="0.8"/>
<rect x="347.35" y="257.8" width="2.1" height="4.1" fill="#cf4510"/>
<line x1="349.82" y1="269.1" x2="349.82" y2="284.0" stroke="#878c16" stroke-width="0.8"/>
<rect x="348.67" y="270.1" width="2.3" height="10.9" fill="#9ea236" stroke="#878c16" stroke-width="0.7"/>
<line x1="351.25" y1="261.0" x2="351.25" y2="279.1" stroke="#878c16" stroke-width="0.8"/>
<rect x="350.10" y="261.3" width="2.3" height="15.4" fill="#9ea236" stroke="#878c16" stroke-width="0.7"/>
<line x1="352.67" y1="277.2" x2="352.67" y2="281.8" stroke="#cf4510" stroke-width="0.8"/>
<rect x="351.62" y="277.6" width="2.1" height="2.2" fill="#cf4510"/>
<line x1="354.09" y1="263.7" x2="354.09" y2="272.0" stroke="#cf4510" stroke-width="0.8"/>
<rect x="353.04" y="266.5" width="2.1" height="2.8" fill="#cf4510"/>
<line x1="355.52" y1="271.4" x2="355.52" y2="283.0" stroke="#cf4510" stroke-width="0.8"/>
<rect x="354.47" y="274.3" width="2.1" height="4.0" fill="#cf4510"/>
<line x1="356.94" y1="273.5" x2="356.94" y2="286.3" stroke="#cf4510" stroke-width="0.8"/>
<rect x="355.89" y="274.0" width="2.1" height="12.3" fill="#cf4510"/>
<line x1="358.36" y1="277.4" x2="358.36" y2="285.6" stroke="#cf4510" stroke-width="0.8"/>
<rect x="357.31" y="278.7" width="2.1" height="5.6" fill="#cf4510"/>
<line x1="359.79" y1="284.8" x2="359.79" y2="303.4" stroke="#cf4510" stroke-width="0.8"/>
<rect x="358.74" y="285.3" width="2.1" height="16.8" fill="#cf4510"/>
<line x1="361.22" y1="283.0" x2="361.22" y2="303.5" stroke="#cf4510" stroke-width="0.8"/>
<rect x="360.17" y="286.9" width="2.1" height="14.1" fill="#cf4510"/>
<line x1="362.67" y1="286.1" x2="362.67" y2="300.2" stroke="#878c16" stroke-width="0.8"/>
<rect x="361.52" y="286.2" width="2.3" height="11.4" fill="#9ea236" stroke="#878c16" stroke-width="0.7"/>
<line x1="364.12" y1="292.2" x2="364.12" y2="304.2" stroke="#cf4510" stroke-width="0.8"/>
<rect x="363.07" y="294.3" width="2.1" height="7.8" fill="#cf4510"/>
<line x1="365.57" y1="298.3" x2="365.57" y2="311.3" stroke="#cf4510" stroke-width="0.8"/>
<rect x="364.52" y="301.9" width="2.1" height="9.4" fill="#cf4510"/>
<line x1="367.01" y1="296.1" x2="367.01" y2="311.0" stroke="#878c16" stroke-width="0.8"/>
<rect x="365.86" y="300.0" width="2.3" height="9.7" fill="#9ea236" stroke="#878c16" stroke-width="0.7"/>
<line x1="368.46" y1="272.6" x2="368.46" y2="287.3" stroke="#878c16" stroke-width="0.8"/>
<rect x="367.31" y="273.5" width="2.3" height="12.2" fill="#9ea236" stroke="#878c16" stroke-width="0.7"/>
<line x1="369.91" y1="271.8" x2="369.91" y2="284.8" stroke="#878c16" stroke-width="0.8"/>
<rect x="368.76" y="274.2" width="2.3" height="9.8" fill="#9ea236" stroke="#878c16" stroke-width="0.7"/>
<line x1="371.36" y1="271.0" x2="371.36" y2="274.6" stroke="#878c16" stroke-width="0.8"/>
<rect x="370.21" y="271.0" width="2.3" height="2.8" fill="#9ea236" stroke="#878c16" stroke-width="0.7"/>
<line x1="372.80" y1="289.8" x2="372.80" y2="301.5" stroke="#cf4510" stroke-width="0.8"/>
<rect x="371.75" y="293.3" width="2.1" height="7.8" fill="#cf4510"/>
<line x1="374.25" y1="281.6" x2="374.25" y2="293.3" stroke="#cf4510" stroke-width="0.8"/>
<rect x="373.20" y="286.6" width="2.1" height="5.1" fill="#cf4510"/>
<line x1="375.70" y1="286.7" x2="375.70" y2="297.3" stroke="#cf4510" stroke-width="0.8"/>
<rect x="374.65" y="287.2" width="2.1" height="7.3" fill="#cf4510"/>
<line x1="377.15" y1="300.8" x2="377.15" y2="312.5" stroke="#cf4510" stroke-width="0.8"/>
<rect x="376.10" y="301.7" width="2.1" height="9.0" fill="#cf4510"/>
<line x1="378.60" y1="308.4" x2="378.60" y2="318.2" stroke="#cf4510" stroke-width="0.8"/>
<rect x="377.55" y="309.4" width="2.1" height="4.0" fill="#cf4510"/>
<line x1="380.04" y1="305.2" x2="380.04" y2="315.0" stroke="#878c16" stroke-width="0.8"/>
<rect x="378.89" y="307.6" width="2.3" height="2.5" fill="#9ea236" stroke="#878c16" stroke-width="0.7"/>
<line x1="381.49" y1="296.5" x2="381.49" y2="320.2" stroke="#878c16" stroke-width="0.8"/>
<rect x="380.34" y="299.5" width="2.3" height="18.6" fill="#9ea236" stroke="#878c16" stroke-width="0.7"/>
<line x1="382.94" y1="285.3" x2="382.94" y2="298.6" stroke="#cf4510" stroke-width="0.8"/>
<rect x="381.89" y="286.3" width="2.1" height="8.9" fill="#cf4510"/>
<line x1="384.39" y1="292.2" x2="384.39" y2="302.7" stroke="#cf4510" stroke-width="0.8"/>
<rect x="383.34" y="296.9" width="2.1" height="4.8" fill="#cf4510"/>
<line x1="385.83" y1="274.9" x2="385.83" y2="291.9" stroke="#878c16" stroke-width="0.8"/>
<rect x="384.68" y="275.8" width="2.3" height="13.2" fill="#9ea236" stroke="#878c16" stroke-width="0.7"/>
<line x1="387.28" y1="273.7" x2="387.28" y2="283.9" stroke="#878c16" stroke-width="0.8"/>
<rect x="386.13" y="277.3" width="2.3" height="5.1" fill="#9ea236" stroke="#878c16" stroke-width="0.7"/>
<line x1="388.73" y1="276.9" x2="388.73" y2="286.2" stroke="#878c16" stroke-width="0.8"/>
<rect x="387.58" y="280.7" width="2.3" height="2.6" fill="#9ea236" stroke="#878c16" stroke-width="0.7"/>
<line x1="390.18" y1="282.8" x2="390.18" y2="289.8" stroke="#878c16" stroke-width="0.8"/>
<rect x="389.03" y="285.7" width="2.3" height="2.1" fill="#9ea236" stroke="#878c16" stroke-width="0.7"/>
<line x1="391.62" y1="276.6" x2="391.62" y2="284.8" stroke="#878c16" stroke-width="0.8"/>
<rect x="390.47" y="279.9" width="2.3" height="2.9" fill="#9ea236" stroke="#878c16" stroke-width="0.7"/>
<line x1="393.05" y1="291.2" x2="393.05" y2="294.5" stroke="#cf4510" stroke-width="0.8"/>
<rect x="392.00" y="291.7" width="2.1" height="1.7" fill="#cf4510"/>
<line x1="394.49" y1="292.6" x2="394.49" y2="302.3" stroke="#cf4510" stroke-width="0.8"/>
<rect x="393.44" y="297.1" width="2.1" height="4.8" fill="#cf4510"/>
<line x1="395.92" y1="299.6" x2="395.92" y2="308.1" stroke="#cf4510" stroke-width="0.8"/>
<rect x="394.87" y="300.3" width="2.1" height="4.1" fill="#cf4510"/>
<line x1="397.36" y1="308.3" x2="397.36" y2="319.3" stroke="#cf4510" stroke-width="0.8"/>
<rect x="396.31" y="309.1" width="2.1" height="7.6" fill="#cf4510"/>
<line x1="398.79" y1="317.7" x2="398.79" y2="322.8" stroke="#878c16" stroke-width="0.8"/>
<rect x="397.64" y="318.2" width="2.3" height="4.6" fill="#9ea236" stroke="#878c16" stroke-width="0.7"/>
<line x1="400.23" y1="317.1" x2="400.23" y2="323.8" stroke="#878c16" stroke-width="0.8"/>
<rect x="399.08" y="317.3" width="2.3" height="5.1" fill="#9ea236" stroke="#878c16" stroke-width="0.7"/>
<line x1="401.66" y1="319.8" x2="401.66" y2="328.2" stroke="#cf4510" stroke-width="0.8"/>
<rect x="400.61" y="322.5" width="2.1" height="4.6" fill="#cf4510"/>
<line x1="403.10" y1="318.7" x2="403.10" y2="333.1" stroke="#cf4510" stroke-width="0.8"/>
<rect x="402.05" y="321.2" width="2.1" height="9.3" fill="#cf4510"/>
<line x1="404.53" y1="321.7" x2="404.53" y2="343.9" stroke="#cf4510" stroke-width="0.8"/>
<rect x="403.48" y="322.4" width="2.1" height="18.5" fill="#cf4510"/>
<line x1="405.97" y1="340.5" x2="405.97" y2="347.3" stroke="#878c16" stroke-width="0.8"/>
<rect x="404.82" y="341.7" width="2.3" height="3.7" fill="#9ea236" stroke="#878c16" stroke-width="0.7"/>
<line x1="407.40" y1="337.7" x2="407.40" y2="352.7" stroke="#cf4510" stroke-width="0.8"/>
<rect x="406.35" y="338.8" width="2.1" height="11.6" fill="#cf4510"/>
<line x1="408.83" y1="329.2" x2="408.83" y2="347.9" stroke="#878c16" stroke-width="0.8"/>
<rect x="407.68" y="333.2" width="2.3" height="12.1" fill="#9ea236" stroke="#878c16" stroke-width="0.7"/>
<line x1="410.27" y1="328.3" x2="410.27" y2="345.3" stroke="#878c16" stroke-width="0.8"/>
<rect x="409.12" y="332.7" width="2.3" height="10.4" fill="#9ea236" stroke="#878c16" stroke-width="0.7"/>
<line x1="411.70" y1="332.7" x2="411.70" y2="352.3" stroke="#878c16" stroke-width="0.8"/>
<rect x="410.55" y="335.1" width="2.3" height="14.9" fill="#9ea236" stroke="#878c16" stroke-width="0.7"/>
<line x1="413.14" y1="330.3" x2="413.14" y2="347.2" stroke="#878c16" stroke-width="0.8"/>
<rect x="411.99" y="332.5" width="2.3" height="13.6" fill="#9ea236" stroke="#878c16" stroke-width="0.7"/>
<line x1="414.57" y1="330.9" x2="414.57" y2="343.3" stroke="#878c16" stroke-width="0.8"/>
<rect x="413.42" y="330.9" width="2.3" height="7.0" fill="#9ea236" stroke="#878c16" stroke-width="0.7"/>
<line x1="416.01" y1="319.1" x2="416.01" y2="331.5" stroke="#cf4510" stroke-width="0.8"/>
<rect x="414.96" y="319.7" width="2.1" height="10.0" fill="#cf4510"/>
<line x1="417.44" y1="316.2" x2="417.44" y2="324.1" stroke="#878c16" stroke-width="0.8"/>
<rect x="416.29" y="317.9" width="2.3" height="2.5" fill="#9ea236" stroke="#878c16" stroke-width="0.7"/>
<line x1="418.88" y1="320.4" x2="418.88" y2="336.1" stroke="#cf4510" stroke-width="0.8"/>
<rect x="417.83" y="323.6" width="2.1" height="12.1" fill="#cf4510"/>
<line x1="420.31" y1="315.1" x2="420.31" y2="324.5" stroke="#878c16" stroke-width="0.8"/>
<rect x="419.16" y="315.9" width="2.3" height="6.6" fill="#9ea236" stroke="#878c16" stroke-width="0.7"/>
<line x1="421.75" y1="300.1" x2="421.75" y2="310.0" stroke="#878c16" stroke-width="0.8"/>
<rect x="420.60" y="305.7" width="2.3" height="2.1" fill="#9ea236" stroke="#878c16" stroke-width="0.7"/>
<line x1="423.18" y1="285.6" x2="423.18" y2="302.8" stroke="#878c16" stroke-width="0.8"/>
<rect x="422.03" y="287.7" width="2.3" height="12.5" fill="#9ea236" stroke="#878c16" stroke-width="0.7"/>
<line x1="424.62" y1="294.7" x2="424.62" y2="302.4" stroke="#cf4510" stroke-width="0.8"/>
<rect x="423.57" y="300.3" width="2.1" height="1.9" fill="#cf4510"/>
<line x1="426.07" y1="285.8" x2="426.07" y2="310.1" stroke="#cf4510" stroke-width="0.8"/>
<rect x="425.02" y="291.4" width="2.1" height="16.1" fill="#cf4510"/>
<line x1="427.52" y1="305.2" x2="427.52" y2="310.4" stroke="#cf4510" stroke-width="0.8"/>
<rect x="426.47" y="307.0" width="2.1" height="3.1" fill="#cf4510"/>
<line x1="428.97" y1="311.5" x2="428.97" y2="320.4" stroke="#878c16" stroke-width="0.8"/>
<rect x="427.82" y="313.6" width="2.3" height="5.0" fill="#9ea236" stroke="#878c16" stroke-width="0.7"/>
<line x1="430.41" y1="316.3" x2="430.41" y2="324.2" stroke="#cf4510" stroke-width="0.8"/>
<rect x="429.36" y="317.4" width="2.1" height="6.0" fill="#cf4510"/>
<line x1="431.86" y1="297.7" x2="431.86" y2="308.9" stroke="#878c16" stroke-width="0.8"/>
<rect x="430.71" y="301.6" width="2.3" height="6.3" fill="#9ea236" stroke="#878c16" stroke-width="0.7"/>
<line x1="433.31" y1="314.1" x2="433.31" y2="334.5" stroke="#cf4510" stroke-width="0.8"/>
<rect x="432.26" y="316.1" width="2.1" height="18.3" fill="#cf4510"/>
<line x1="434.76" y1="299.8" x2="434.76" y2="322.7" stroke="#cf4510" stroke-width="0.8"/>
<rect x="433.71" y="304.2" width="2.1" height="16.1" fill="#cf4510"/>
<line x1="436.20" y1="312.5" x2="436.20" y2="326.7" stroke="#878c16" stroke-width="0.8"/>
<rect x="435.05" y="313.4" width="2.3" height="13.3" fill="#9ea236" stroke="#878c16" stroke-width="0.7"/>
<line x1="437.65" y1="333.6" x2="437.65" y2="344.0" stroke="#cf4510" stroke-width="0.8"/>
<rect x="436.60" y="334.8" width="2.1" height="6.3" fill="#cf4510"/>
<line x1="439.10" y1="327.1" x2="439.10" y2="338.6" stroke="#878c16" stroke-width="0.8"/>
<rect x="437.95" y="329.4" width="2.3" height="7.3" fill="#9ea236" stroke="#878c16" stroke-width="0.7"/>
<line x1="440.54" y1="332.9" x2="440.54" y2="349.0" stroke="#cf4510" stroke-width="0.8"/>
<rect x="439.49" y="337.3" width="2.1" height="11.4" fill="#cf4510"/>
<line x1="441.99" y1="338.9" x2="441.99" y2="350.1" stroke="#cf4510" stroke-width="0.8"/>
<rect x="440.94" y="344.0" width="2.1" height="4.2" fill="#cf4510"/>
<line x1="443.44" y1="333.8" x2="443.44" y2="343.4" stroke="#878c16" stroke-width="0.8"/>
<rect x="442.29" y="338.6" width="2.3" height="2.8" fill="#9ea236" stroke="#878c16" stroke-width="0.7"/>
<line x1="444.89" y1="317.7" x2="444.89" y2="336.7" stroke="#878c16" stroke-width="0.8"/>
<rect x="443.74" y="321.5" width="2.3" height="14.7" fill="#9ea236" stroke="#878c16" stroke-width="0.7"/>
<line x1="446.33" y1="339.0" x2="446.33" y2="347.1" stroke="#cf4510" stroke-width="0.8"/>
<rect x="445.28" y="340.5" width="2.1" height="6.2" fill="#cf4510"/>
<line x1="447.78" y1="327.9" x2="447.78" y2="337.1" stroke="#878c16" stroke-width="0.8"/>
<rect x="446.63" y="328.6" width="2.3" height="4.1" fill="#9ea236" stroke="#878c16" stroke-width="0.7"/>
<line x1="449.23" y1="318.3" x2="449.23" y2="322.1" stroke="#878c16" stroke-width="0.8"/>
<rect x="448.08" y="319.4" width="2.3" height="2.0" fill="#9ea236" stroke="#878c16" stroke-width="0.7"/>
<line x1="450.68" y1="326.7" x2="450.68" y2="339.1" stroke="#cf4510" stroke-width="0.8"/>
<rect x="449.63" y="327.4" width="2.1" height="9.2" fill="#cf4510"/>
<line x1="452.13" y1="315.9" x2="452.13" y2="331.0" stroke="#878c16" stroke-width="0.8"/>
<rect x="450.98" y="321.4" width="2.3" height="9.1" fill="#9ea236" stroke="#878c16" stroke-width="0.7"/>
<line x1="453.60" y1="304.1" x2="453.60" y2="327.8" stroke="#cf4510" stroke-width="0.8"/>
<rect x="452.55" y="308.2" width="2.1" height="18.2" fill="#cf4510"/>
<line x1="455.07" y1="331.6" x2="455.07" y2="336.6" stroke="#878c16" stroke-width="0.8"/>
<rect x="453.92" y="332.5" width="2.3" height="3.1" fill="#9ea236" stroke="#878c16" stroke-width="0.7"/>
<line x1="456.53" y1="316.2" x2="456.53" y2="326.2" stroke="#878c16" stroke-width="0.8"/>
<rect x="455.38" y="321.7" width="2.3" height="2.5" fill="#9ea236" stroke="#878c16" stroke-width="0.7"/>
<line x1="458.00" y1="325.8" x2="458.00" y2="335.6" stroke="#cf4510" stroke-width="0.8"/>
<rect x="456.95" y="326.4" width="2.1" height="5.6" fill="#cf4510"/>
<line x1="459.47" y1="327.9" x2="459.47" y2="337.7" stroke="#cf4510" stroke-width="0.8"/>
<rect x="458.42" y="330.1" width="2.1" height="7.5" fill="#cf4510"/>
<line x1="460.93" y1="313.2" x2="460.93" y2="331.8" stroke="#878c16" stroke-width="0.8"/>
<rect x="459.78" y="314.8" width="2.3" height="16.2" fill="#9ea236" stroke="#878c16" stroke-width="0.7"/>
<line x1="462.40" y1="301.0" x2="462.40" y2="316.0" stroke="#cf4510" stroke-width="0.8"/>
<rect x="461.35" y="305.7" width="2.1" height="8.8" fill="#cf4510"/>
<line x1="463.87" y1="314.7" x2="463.87" y2="329.6" stroke="#878c16" stroke-width="0.8"/>
<rect x="462.72" y="320.2" width="2.3" height="8.9" fill="#9ea236" stroke="#878c16" stroke-width="0.7"/>
<line x1="465.33" y1="316.2" x2="465.33" y2="326.2" stroke="#878c16" stroke-width="0.8"/>
<rect x="464.18" y="317.5" width="2.3" height="6.9" fill="#9ea236" stroke="#878c16" stroke-width="0.7"/>
<line x1="466.80" y1="317.1" x2="466.80" y2="322.5" stroke="#cf4510" stroke-width="0.8"/>
<rect x="465.75" y="320.1" width="2.1" height="2.0" fill="#cf4510"/>
<line x1="468.27" y1="309.7" x2="468.27" y2="329.2" stroke="#878c16" stroke-width="0.8"/>
<rect x="467.12" y="311.3" width="2.3" height="16.4" fill="#9ea236" stroke="#878c16" stroke-width="0.7"/>
<line x1="469.73" y1="317.2" x2="469.73" y2="330.6" stroke="#cf4510" stroke-width="0.8"/>
<rect x="468.68" y="321.9" width="2.1" height="4.5" fill="#cf4510"/>
<line x1="471.20" y1="302.5" x2="471.20" y2="312.3" stroke="#878c16" stroke-width="0.8"/>
<rect x="470.05" y="308.0" width="2.3" height="3.6" fill="#9ea236" stroke="#878c16" stroke-width="0.7"/>
<line x1="472.67" y1="315.6" x2="472.67" y2="321.8" stroke="#cf4510" stroke-width="0.8"/>
<rect x="471.62" y="315.9" width="2.1" height="5.4" fill="#cf4510"/>
<line x1="474.13" y1="308.2" x2="474.13" y2="316.0" stroke="#878c16" stroke-width="0.8"/>
<rect x="472.98" y="311.1" width="2.3" height="3.1" fill="#9ea236" stroke="#878c16" stroke-width="0.7"/>
<line x1="475.60" y1="311.5" x2="475.60" y2="324.0" stroke="#cf4510" stroke-width="0.8"/>
<rect x="474.55" y="311.7" width="2.1" height="11.6" fill="#cf4510"/>
<line x1="477.07" y1="295.5" x2="477.07" y2="300.7" stroke="#878c16" stroke-width="0.8"/>
<rect x="475.92" y="297.5" width="2.3" height="1.6" fill="#9ea236" stroke="#878c16" stroke-width="0.7"/>
<line x1="478.53" y1="292.2" x2="478.53" y2="303.1" stroke="#878c16" stroke-width="0.8"/>
<rect x="477.38" y="296.3" width="2.3" height="5.2" fill="#9ea236" stroke="#878c16" stroke-width="0.7"/>
<line x1="480.00" y1="291.7" x2="480.00" y2="303.1" stroke="#878c16" stroke-width="0.8"/>
<rect x="478.85" y="296.3" width="2.3" height="4.7" fill="#9ea236" stroke="#878c16" stroke-width="0.7"/>
<line x1="481.47" y1="300.2" x2="481.47" y2="309.4" stroke="#cf4510" stroke-width="0.8"/>
<rect x="480.42" y="301.2" width="2.1" height="6.7" fill="#cf4510"/>
<line x1="482.92" y1="301.9" x2="482.92" y2="311.7" stroke="#cf4510" stroke-width="0.8"/>
<rect x="481.87" y="306.2" width="2.1" height="3.3" fill="#cf4510"/>
<line x1="484.37" y1="276.8" x2="484.37" y2="283.2" stroke="#878c16" stroke-width="0.8"/>
<rect x="483.22" y="278.7" width="2.3" height="3.9" fill="#9ea236" stroke="#878c16" stroke-width="0.7"/>
<line x1="485.82" y1="275.5" x2="485.82" y2="288.4" stroke="#cf4510" stroke-width="0.8"/>
<rect x="484.77" y="278.2" width="2.1" height="9.2" fill="#cf4510"/>
<line x1="487.27" y1="291.3" x2="487.27" y2="315.6" stroke="#878c16" stroke-width="0.8"/>
<rect x="486.12" y="292.3" width="2.3" height="18.0" fill="#9ea236" stroke="#878c16" stroke-width="0.7"/>
<line x1="488.71" y1="292.8" x2="488.71" y2="310.3" stroke="#cf4510" stroke-width="0.8"/>
<rect x="487.66" y="296.7" width="2.1" height="12.9" fill="#cf4510"/>
<line x1="490.16" y1="282.1" x2="490.16" y2="298.7" stroke="#878c16" stroke-width="0.8"/>
<rect x="489.01" y="285.5" width="2.3" height="11.7" fill="#9ea236" stroke="#878c16" stroke-width="0.7"/>
<line x1="491.61" y1="267.2" x2="491.61" y2="279.4" stroke="#878c16" stroke-width="0.8"/>
<rect x="490.46" y="267.7" width="2.3" height="9.7" fill="#9ea236" stroke="#878c16" stroke-width="0.7"/>
<line x1="493.06" y1="268.2" x2="493.06" y2="275.3" stroke="#878c16" stroke-width="0.8"/>
<rect x="491.91" y="268.2" width="2.3" height="6.9" fill="#9ea236" stroke="#878c16" stroke-width="0.7"/>
<line x1="494.50" y1="286.1" x2="494.50" y2="294.1" stroke="#cf4510" stroke-width="0.8"/>
<rect x="493.45" y="287.7" width="2.1" height="5.0" fill="#cf4510"/>
<line x1="495.95" y1="287.6" x2="495.95" y2="299.0" stroke="#cf4510" stroke-width="0.8"/>
<rect x="494.90" y="292.6" width="2.1" height="5.1" fill="#cf4510"/>
<line x1="497.40" y1="292.1" x2="497.40" y2="301.3" stroke="#cf4510" stroke-width="0.8"/>
<rect x="496.35" y="292.8" width="2.1" height="6.0" fill="#cf4510"/>
<line x1="498.85" y1="293.2" x2="498.85" y2="297.8" stroke="#878c16" stroke-width="0.8"/>
<rect x="497.70" y="293.2" width="2.3" height="3.0" fill="#9ea236" stroke="#878c16" stroke-width="0.7"/>
<line x1="500.30" y1="299.7" x2="500.30" y2="308.8" stroke="#cf4510" stroke-width="0.8"/>
<rect x="499.25" y="303.0" width="2.1" height="2.2" fill="#cf4510"/>
<line x1="501.74" y1="299.7" x2="501.74" y2="304.1" stroke="#878c16" stroke-width="0.8"/>
<rect x="500.59" y="302.0" width="2.3" height="2.0" fill="#9ea236" stroke="#878c16" stroke-width="0.7"/>
<line x1="503.19" y1="320.7" x2="503.19" y2="330.2" stroke="#cf4510" stroke-width="0.8"/>
<rect x="502.14" y="321.6" width="2.1" height="8.3" fill="#cf4510"/>
<line x1="504.64" y1="317.8" x2="504.64" y2="330.1" stroke="#878c16" stroke-width="0.8"/>
<rect x="503.49" y="318.9" width="2.3" height="5.5" fill="#9ea236" stroke="#878c16" stroke-width="0.7"/>
<line x1="506.09" y1="313.8" x2="506.09" y2="326.5" stroke="#cf4510" stroke-width="0.8"/>
<rect x="505.04" y="315.5" width="2.1" height="8.1" fill="#cf4510"/>
<line x1="507.53" y1="307.5" x2="507.53" y2="314.6" stroke="#cf4510" stroke-width="0.8"/>
<rect x="506.48" y="307.7" width="2.1" height="3.1" fill="#cf4510"/>
<line x1="508.98" y1="302.8" x2="508.98" y2="327.8" stroke="#878c16" stroke-width="0.8"/>
<rect x="507.83" y="306.6" width="2.3" height="17.9" fill="#9ea236" stroke="#878c16" stroke-width="0.7"/>
<line x1="510.43" y1="305.9" x2="510.43" y2="316.6" stroke="#cf4510" stroke-width="0.8"/>
<rect x="509.38" y="309.4" width="2.1" height="6.5" fill="#cf4510"/>
<line x1="511.88" y1="318.9" x2="511.88" y2="332.3" stroke="#cf4510" stroke-width="0.8"/>
<rect x="510.83" y="321.0" width="2.1" height="9.6" fill="#cf4510"/>
<line x1="513.31" y1="311.0" x2="513.31" y2="323.7" stroke="#cf4510" stroke-width="0.8"/>
<rect x="512.26" y="313.5" width="2.1" height="9.4" fill="#cf4510"/>
<line x1="514.73" y1="314.6" x2="514.73" y2="326.1" stroke="#cf4510" stroke-width="0.8"/>
<rect x="513.68" y="316.2" width="2.1" height="9.4" fill="#cf4510"/>
<line x1="516.15" y1="296.3" x2="516.15" y2="310.7" stroke="#cf4510" stroke-width="0.8"/>
<rect x="515.10" y="301.5" width="2.1" height="6.5" fill="#cf4510"/>
<line x1="517.57" y1="308.7" x2="517.57" y2="329.6" stroke="#cf4510" stroke-width="0.8"/>
<rect x="516.52" y="309.5" width="2.1" height="17.9" fill="#cf4510"/>
<line x1="518.99" y1="314.6" x2="518.99" y2="324.8" stroke="#cf4510" stroke-width="0.8"/>
<rect x="517.94" y="320.0" width="2.1" height="4.7" fill="#cf4510"/>
<line x1="520.41" y1="319.9" x2="520.41" y2="326.1" stroke="#cf4510" stroke-width="0.8"/>
<rect x="519.36" y="324.0" width="2.1" height="1.7" fill="#cf4510"/>
<line x1="521.83" y1="306.6" x2="521.83" y2="317.4" stroke="#878c16" stroke-width="0.8"/>
<rect x="520.68" y="310.5" width="2.3" height="5.8" fill="#9ea236" stroke="#878c16" stroke-width="0.7"/>
<line x1="523.25" y1="302.1" x2="523.25" y2="313.9" stroke="#cf4510" stroke-width="0.8"/>
<rect x="522.20" y="305.3" width="2.1" height="7.4" fill="#cf4510"/>
<line x1="524.67" y1="297.5" x2="524.67" y2="310.6" stroke="#878c16" stroke-width="0.8"/>
<rect x="523.52" y="302.9" width="2.3" height="2.3" fill="#9ea236" stroke="#878c16" stroke-width="0.7"/>
<line x1="526.09" y1="308.5" x2="526.09" y2="323.4" stroke="#cf4510" stroke-width="0.8"/>
<rect x="525.04" y="311.6" width="2.1" height="6.1" fill="#cf4510"/>
<line x1="527.51" y1="316.8" x2="527.51" y2="335.1" stroke="#878c16" stroke-width="0.8"/>
<rect x="526.36" y="318.6" width="2.3" height="12.6" fill="#9ea236" stroke="#878c16" stroke-width="0.7"/>
<line x1="528.93" y1="308.8" x2="528.93" y2="316.0" stroke="#878c16" stroke-width="0.8"/>
<rect x="527.78" y="309.6" width="2.3" height="3.9" fill="#9ea236" stroke="#878c16" stroke-width="0.7"/>
<line x1="530.35" y1="305.3" x2="530.35" y2="320.8" stroke="#cf4510" stroke-width="0.8"/>
<rect x="529.30" y="307.3" width="2.1" height="12.2" fill="#cf4510"/>
<line x1="531.77" y1="312.4" x2="531.77" y2="319.0" stroke="#cf4510" stroke-width="0.8"/>
<rect x="530.72" y="313.0" width="2.1" height="4.0" fill="#cf4510"/>
<line x1="533.19" y1="287.6" x2="533.19" y2="312.0" stroke="#878c16" stroke-width="0.8"/>
<rect x="532.04" y="291.5" width="2.3" height="18.5" fill="#9ea236" stroke="#878c16" stroke-width="0.7"/>
<line x1="534.61" y1="285.2" x2="534.61" y2="294.5" stroke="#878c16" stroke-width="0.8"/>
<rect x="533.46" y="287.6" width="2.3" height="4.2" fill="#9ea236" stroke="#878c16" stroke-width="0.7"/>
<line x1="536.03" y1="278.9" x2="536.03" y2="290.6" stroke="#878c16" stroke-width="0.8"/>
<rect x="534.88" y="282.2" width="2.3" height="4.4" fill="#9ea236" stroke="#878c16" stroke-width="0.7"/>
<line x1="537.45" y1="239.0" x2="537.45" y2="300.0" stroke="#878c16" stroke-width="0.8"/>
<rect x="536.30" y="245.0" width="2.3" height="45.0" fill="#9ea236" stroke="#878c16" stroke-width="0.7"/>
<line x1="538.87" y1="250.0" x2="538.87" y2="290.0" stroke="#cf4510" stroke-width="0.8"/>
<rect x="537.82" y="255.0" width="2.1" height="30.0" fill="#cf4510"/>
<line x1="540.29" y1="281.4" x2="540.29" y2="293.1" stroke="#878c16" stroke-width="0.8"/>
<rect x="539.14" y="284.9" width="2.3" height="6.1" fill="#9ea236" stroke="#878c16" stroke-width="0.7"/>
<line x1="541.72" y1="283.8" x2="541.72" y2="292.9" stroke="#cf4510" stroke-width="0.8"/>
<rect x="540.67" y="287.0" width="2.1" height="3.7" fill="#cf4510"/>
<line x1="543.16" y1="288.0" x2="543.16" y2="301.9" stroke="#cf4510" stroke-width="0.8"/>
<rect x="542.11" y="294.1" width="2.1" height="6.3" fill="#cf4510"/>
<line x1="544.61" y1="320.8" x2="544.61" y2="336.1" stroke="#cf4510" stroke-width="0.8"/>
<rect x="543.56" y="322.1" width="2.1" height="11.0" fill="#cf4510"/>
<line x1="546.05" y1="335.5" x2="546.05" y2="344.7" stroke="#cf4510" stroke-width="0.8"/>
<rect x="545.00" y="338.8" width="2.1" height="3.5" fill="#cf4510"/>
<line x1="547.49" y1="345.0" x2="547.49" y2="355.0" stroke="#cf4510" stroke-width="0.8"/>
<rect x="546.44" y="345.5" width="2.1" height="7.9" fill="#cf4510"/>
<line x1="548.94" y1="343.6" x2="548.94" y2="364.0" stroke="#cf4510" stroke-width="0.8"/>
<rect x="547.89" y="344.4" width="2.1" height="16.9" fill="#cf4510"/>
<line x1="550.38" y1="338.8" x2="550.38" y2="347.2" stroke="#878c16" stroke-width="0.8"/>
<rect x="549.23" y="340.0" width="2.3" height="6.8" fill="#9ea236" stroke="#878c16" stroke-width="0.7"/>
<line x1="551.82" y1="345.0" x2="551.82" y2="353.6" stroke="#cf4510" stroke-width="0.8"/>
<rect x="550.77" y="345.4" width="2.1" height="6.6" fill="#cf4510"/>
<line x1="553.26" y1="345.6" x2="553.26" y2="352.2" stroke="#cf4510" stroke-width="0.8"/>
<rect x="552.21" y="345.9" width="2.1" height="5.4" fill="#cf4510"/>
<line x1="554.71" y1="350.6" x2="554.71" y2="364.1" stroke="#cf4510" stroke-width="0.8"/>
<rect x="553.66" y="353.0" width="2.1" height="7.7" fill="#cf4510"/>
<line x1="556.15" y1="347.4" x2="556.15" y2="358.7" stroke="#878c16" stroke-width="0.8"/>
<rect x="555.00" y="349.2" width="2.3" height="9.1" fill="#9ea236" stroke="#878c16" stroke-width="0.7"/>
<line x1="557.59" y1="347.8" x2="557.59" y2="363.3" stroke="#878c16" stroke-width="0.8"/>
<rect x="556.44" y="350.6" width="2.3" height="10.2" fill="#9ea236" stroke="#878c16" stroke-width="0.7"/>
<line x1="559.04" y1="346.3" x2="559.04" y2="355.0" stroke="#cf4510" stroke-width="0.8"/>
<rect x="557.99" y="346.4" width="2.1" height="5.6" fill="#cf4510"/>
<line x1="560.48" y1="356.9" x2="560.48" y2="367.7" stroke="#cf4510" stroke-width="0.8"/>
<rect x="559.43" y="358.9" width="2.1" height="8.3" fill="#cf4510"/>
<line x1="561.92" y1="350.5" x2="561.92" y2="363.8" stroke="#878c16" stroke-width="0.8"/>
<rect x="560.77" y="351.5" width="2.3" height="10.3" fill="#9ea236" stroke="#878c16" stroke-width="0.7"/>
<line x1="563.36" y1="362.3" x2="563.36" y2="371.2" stroke="#cf4510" stroke-width="0.8"/>
<rect x="562.31" y="363.0" width="2.1" height="7.3" fill="#cf4510"/>
<line x1="564.81" y1="353.4" x2="564.81" y2="357.9" stroke="#878c16" stroke-width="0.8"/>
<rect x="563.66" y="355.5" width="2.3" height="1.6" fill="#9ea236" stroke="#878c16" stroke-width="0.7"/>
<line x1="566.25" y1="349.5" x2="566.25" y2="365.3" stroke="#878c16" stroke-width="0.8"/>
<rect x="565.10" y="354.4" width="2.3" height="8.1" fill="#9ea236" stroke="#878c16" stroke-width="0.7"/>
<line x1="567.69" y1="359.3" x2="567.69" y2="364.9" stroke="#cf4510" stroke-width="0.8"/>
<rect x="566.64" y="359.5" width="2.1" height="4.9" fill="#cf4510"/>
<line x1="569.14" y1="345.9" x2="569.14" y2="359.6" stroke="#cf4510" stroke-width="0.8"/>
<rect x="568.09" y="348.2" width="2.1" height="8.4" fill="#cf4510"/>
<line x1="570.58" y1="339.6" x2="570.58" y2="352.1" stroke="#878c16" stroke-width="0.8"/>
<rect x="569.43" y="340.2" width="2.3" height="10.9" fill="#9ea236" stroke="#878c16" stroke-width="0.7"/>
<line x1="572.02" y1="345.7" x2="572.02" y2="351.5" stroke="#cf4510" stroke-width="0.8"/>
<rect x="570.97" y="347.3" width="2.1" height="3.9" fill="#cf4510"/>
<line x1="573.47" y1="343.7" x2="573.47" y2="351.4" stroke="#cf4510" stroke-width="0.8"/>
<rect x="572.42" y="345.1" width="2.1" height="3.2" fill="#cf4510"/>
<line x1="574.92" y1="330.2" x2="574.92" y2="340.1" stroke="#878c16" stroke-width="0.8"/>
<rect x="573.77" y="330.3" width="2.3" height="7.3" fill="#9ea236" stroke="#878c16" stroke-width="0.7"/>
<line x1="576.37" y1="358.9" x2="576.37" y2="362.9" stroke="#878c16" stroke-width="0.8"/>
<rect x="575.22" y="359.3" width="2.3" height="1.7" fill="#9ea236" stroke="#878c16" stroke-width="0.7"/>
<line x1="577.81" y1="351.3" x2="577.81" y2="355.7" stroke="#878c16" stroke-width="0.8"/>
<rect x="576.66" y="351.4" width="2.3" height="3.2" fill="#9ea236" stroke="#878c16" stroke-width="0.7"/>
<line x1="579.26" y1="355.5" x2="579.26" y2="369.9" stroke="#cf4510" stroke-width="0.8"/>
<rect x="578.21" y="359.2" width="2.1" height="8.8" fill="#cf4510"/>
<line x1="580.71" y1="351.5" x2="580.71" y2="367.9" stroke="#cf4510" stroke-width="0.8"/>
<rect x="579.66" y="357.1" width="2.1" height="7.7" fill="#cf4510"/>
<line x1="582.16" y1="345.4" x2="582.16" y2="364.9" stroke="#878c16" stroke-width="0.8"/>
<rect x="581.01" y="347.3" width="2.3" height="14.7" fill="#9ea236" stroke="#878c16" stroke-width="0.7"/>
<line x1="583.60" y1="346.0" x2="583.60" y2="362.3" stroke="#878c16" stroke-width="0.8"/>
<rect x="582.45" y="351.7" width="2.3" height="10.2" fill="#9ea236" stroke="#878c16" stroke-width="0.7"/>
<line x1="585.05" y1="369.5" x2="585.05" y2="377.3" stroke="#878c16" stroke-width="0.8"/>
<rect x="583.90" y="370.3" width="2.3" height="5.2" fill="#9ea236" stroke="#878c16" stroke-width="0.7"/>
<line x1="586.50" y1="356.6" x2="586.50" y2="367.3" stroke="#878c16" stroke-width="0.8"/>
<rect x="585.35" y="356.6" width="2.3" height="9.8" fill="#9ea236" stroke="#878c16" stroke-width="0.7"/>
<line x1="587.94" y1="356.8" x2="587.94" y2="371.4" stroke="#cf4510" stroke-width="0.8"/>
<rect x="586.89" y="359.8" width="2.1" height="8.7" fill="#cf4510"/>
<line x1="589.39" y1="346.2" x2="589.39" y2="366.0" stroke="#878c16" stroke-width="0.8"/>
<rect x="588.24" y="352.0" width="2.3" height="12.1" fill="#9ea236" stroke="#878c16" stroke-width="0.7"/>
<line x1="590.84" y1="349.7" x2="590.84" y2="357.8" stroke="#878c16" stroke-width="0.8"/>
<rect x="589.69" y="352.2" width="2.3" height="4.8" fill="#9ea236" stroke="#878c16" stroke-width="0.7"/>
<line x1="592.29" y1="277.6" x2="592.29" y2="340.0" stroke="#878c16" stroke-width="0.8"/>
<rect x="591.14" y="281.0" width="2.3" height="54.0" fill="#9ea236" stroke="#878c16" stroke-width="0.7"/>
<line x1="593.73" y1="288.0" x2="593.73" y2="310.0" stroke="#cf4510" stroke-width="0.8"/>
<rect x="592.68" y="290.0" width="2.1" height="15.0" fill="#cf4510"/>
<line x1="595.18" y1="326.0" x2="595.18" y2="336.9" stroke="#878c16" stroke-width="0.8"/>
<rect x="594.03" y="327.0" width="2.3" height="7.4" fill="#9ea236" stroke="#878c16" stroke-width="0.7"/>
<line x1="596.63" y1="312.3" x2="596.63" y2="317.0" stroke="#cf4510" stroke-width="0.8"/>
<rect x="595.58" y="312.9" width="2.1" height="3.3" fill="#cf4510"/>
<line x1="598.08" y1="312.3" x2="598.08" y2="326.2" stroke="#cf4510" stroke-width="0.8"/>
<rect x="597.03" y="314.0" width="2.1" height="5.3" fill="#cf4510"/>
<line x1="599.53" y1="308.6" x2="599.53" y2="315.1" stroke="#cf4510" stroke-width="0.8"/>
<rect x="598.48" y="310.0" width="2.1" height="2.3" fill="#cf4510"/>
<line x1="600.99" y1="304.7" x2="600.99" y2="321.7" stroke="#cf4510" stroke-width="0.8"/>
<rect x="599.94" y="308.7" width="2.1" height="11.6" fill="#cf4510"/>
<line x1="602.45" y1="329.9" x2="602.45" y2="338.8" stroke="#cf4510" stroke-width="0.8"/>
<rect x="601.40" y="330.8" width="2.1" height="3.2" fill="#cf4510"/>
<line x1="603.91" y1="319.6" x2="603.91" y2="336.8" stroke="#cf4510" stroke-width="0.8"/>
<rect x="602.86" y="321.2" width="2.1" height="14.9" fill="#cf4510"/>
<line x1="605.37" y1="339.3" x2="605.37" y2="355.5" stroke="#cf4510" stroke-width="0.8"/>
<rect x="604.32" y="341.5" width="2.1" height="9.6" fill="#cf4510"/>
<line x1="606.83" y1="343.1" x2="606.83" y2="350.2" stroke="#878c16" stroke-width="0.8"/>
<rect x="605.68" y="344.2" width="2.3" height="4.4" fill="#9ea236" stroke="#878c16" stroke-width="0.7"/>
<line x1="608.29" y1="338.7" x2="608.29" y2="359.5" stroke="#cf4510" stroke-width="0.8"/>
<rect x="607.24" y="340.5" width="2.1" height="13.7" fill="#cf4510"/>
<line x1="609.75" y1="357.8" x2="609.75" y2="363.9" stroke="#cf4510" stroke-width="0.8"/>
<rect x="608.70" y="359.1" width="2.1" height="1.6" fill="#cf4510"/>
<line x1="611.21" y1="372.5" x2="611.21" y2="384.1" stroke="#cf4510" stroke-width="0.8"/>
<rect x="610.16" y="373.8" width="2.1" height="10.1" fill="#cf4510"/>
<line x1="612.67" y1="371.8" x2="612.67" y2="393.0" stroke="#878c16" stroke-width="0.8"/>
<rect x="611.52" y="377.7" width="2.3" height="15.2" fill="#9ea236" stroke="#878c16" stroke-width="0.7"/>
<line x1="614.13" y1="366.7" x2="614.13" y2="376.2" stroke="#878c16" stroke-width="0.8"/>
<rect x="612.98" y="368.6" width="2.3" height="5.0" fill="#9ea236" stroke="#878c16" stroke-width="0.7"/>
<line x1="615.59" y1="351.1" x2="615.59" y2="365.7" stroke="#878c16" stroke-width="0.8"/>
<rect x="614.44" y="354.1" width="2.3" height="6.7" fill="#9ea236" stroke="#878c16" stroke-width="0.7"/>
<line x1="617.05" y1="348.7" x2="617.05" y2="357.0" stroke="#878c16" stroke-width="0.8"/>
<rect x="615.90" y="349.9" width="2.3" height="5.7" fill="#9ea236" stroke="#878c16" stroke-width="0.7"/>
<line x1="618.51" y1="337.1" x2="618.51" y2="345.0" stroke="#cf4510" stroke-width="0.8"/>
<rect x="617.46" y="337.1" width="2.1" height="5.2" fill="#cf4510"/>
<line x1="619.97" y1="331.3" x2="619.97" y2="345.5" stroke="#878c16" stroke-width="0.8"/>
<rect x="618.82" y="331.3" width="2.3" height="12.8" fill="#9ea236" stroke="#878c16" stroke-width="0.7"/>
<line x1="621.43" y1="325.5" x2="621.43" y2="332.1" stroke="#878c16" stroke-width="0.8"/>
<rect x="620.28" y="325.5" width="2.3" height="6.2" fill="#9ea236" stroke="#878c16" stroke-width="0.7"/>
<line x1="622.89" y1="345.1" x2="622.89" y2="353.5" stroke="#cf4510" stroke-width="0.8"/>
<rect x="621.84" y="346.9" width="2.1" height="3.1" fill="#cf4510"/>
<line x1="624.35" y1="340.3" x2="624.35" y2="353.6" stroke="#878c16" stroke-width="0.8"/>
<rect x="623.20" y="343.1" width="2.3" height="9.2" fill="#9ea236" stroke="#878c16" stroke-width="0.7"/>
<line x1="625.81" y1="344.8" x2="625.81" y2="356.9" stroke="#cf4510" stroke-width="0.8"/>
<rect x="624.76" y="347.6" width="2.1" height="4.4" fill="#cf4510"/>
<line x1="627.27" y1="352.8" x2="627.27" y2="364.8" stroke="#cf4510" stroke-width="0.8"/>
<rect x="626.22" y="355.9" width="2.1" height="7.0" fill="#cf4510"/>
<line x1="628.74" y1="348.6" x2="628.74" y2="354.3" stroke="#878c16" stroke-width="0.8"/>
<rect x="627.59" y="349.9" width="2.3" height="3.8" fill="#9ea236" stroke="#878c16" stroke-width="0.7"/>
<line x1="630.22" y1="356.8" x2="630.22" y2="367.3" stroke="#cf4510" stroke-width="0.8"/>
<rect x="629.17" y="359.8" width="2.1" height="6.2" fill="#cf4510"/>
<line x1="631.70" y1="339.0" x2="631.70" y2="367.4" stroke="#878c16" stroke-width="0.8"/>
<rect x="630.55" y="345.3" width="2.3" height="16.9" fill="#9ea236" stroke="#878c16" stroke-width="0.7"/>
<line x1="633.18" y1="348.4" x2="633.18" y2="367.8" stroke="#878c16" stroke-width="0.8"/>
<rect x="632.03" y="352.2" width="2.3" height="9.8" fill="#9ea236" stroke="#878c16" stroke-width="0.7"/>
<line x1="634.66" y1="353.9" x2="634.66" y2="370.7" stroke="#cf4510" stroke-width="0.8"/>
<rect x="633.61" y="356.1" width="2.1" height="13.9" fill="#cf4510"/>
<line x1="636.15" y1="350.1" x2="636.15" y2="360.8" stroke="#cf4510" stroke-width="0.8"/>
<rect x="635.10" y="351.7" width="2.1" height="5.2" fill="#cf4510"/>
<line x1="637.63" y1="333.0" x2="637.63" y2="353.4" stroke="#878c16" stroke-width="0.8"/>
<rect x="636.48" y="336.3" width="2.3" height="14.8" fill="#9ea236" stroke="#878c16" stroke-width="0.7"/>
<line x1="639.11" y1="353.5" x2="639.11" y2="368.0" stroke="#cf4510" stroke-width="0.8"/>
<rect x="638.06" y="353.9" width="2.1" height="10.2" fill="#cf4510"/>
<line x1="640.59" y1="337.7" x2="640.59" y2="356.5" stroke="#878c16" stroke-width="0.8"/>
<rect x="639.44" y="342.5" width="2.3" height="12.7" fill="#9ea236" stroke="#878c16" stroke-width="0.7"/>
<line x1="642.07" y1="300.0" x2="642.07" y2="350.0" stroke="#878c16" stroke-width="0.8"/>
<rect x="640.92" y="304.0" width="2.3" height="41.0" fill="#9ea236" stroke="#878c16" stroke-width="0.7"/>
<line x1="643.55" y1="338.5" x2="643.55" y2="353.6" stroke="#878c16" stroke-width="0.8"/>
<rect x="642.40" y="344.1" width="2.3" height="7.8" fill="#9ea236" stroke="#878c16" stroke-width="0.7"/>
<line x1="645.03" y1="341.3" x2="645.03" y2="345.7" stroke="#878c16" stroke-width="0.8"/>
<rect x="643.88" y="341.9" width="2.3" height="2.2" fill="#9ea236" stroke="#878c16" stroke-width="0.7"/>
<line x1="646.51" y1="291.0" x2="646.51" y2="345.0" stroke="#878c16" stroke-width="0.8"/>
<rect x="645.36" y="296.0" width="2.3" height="44.0" fill="#9ea236" stroke="#878c16" stroke-width="0.7"/>
<line x1="647.99" y1="316.6" x2="647.99" y2="340.2" stroke="#cf4510" stroke-width="0.8"/>
<rect x="646.94" y="319.5" width="2.1" height="20.5" fill="#cf4510"/>
<line x1="649.47" y1="324.2" x2="649.47" y2="340.3" stroke="#cf4510" stroke-width="0.8"/>
<rect x="648.42" y="326.2" width="2.1" height="13.7" fill="#cf4510"/>
<line x1="650.95" y1="313.5" x2="650.95" y2="329.3" stroke="#cf4510" stroke-width="0.8"/>
<rect x="649.90" y="316.8" width="2.1" height="8.3" fill="#cf4510"/>
<line x1="652.44" y1="324.3" x2="652.44" y2="331.0" stroke="#cf4510" stroke-width="0.8"/>
<rect x="651.39" y="325.4" width="2.1" height="4.0" fill="#cf4510"/>
<line x1="653.92" y1="339.4" x2="653.92" y2="347.1" stroke="#cf4510" stroke-width="0.8"/>
<rect x="652.87" y="341.7" width="2.1" height="3.2" fill="#cf4510"/>
<line x1="655.40" y1="343.7" x2="655.40" y2="349.7" stroke="#cf4510" stroke-width="0.8"/>
<rect x="654.35" y="346.2" width="2.1" height="2.4" fill="#cf4510"/>
<line x1="656.88" y1="347.1" x2="656.88" y2="354.9" stroke="#cf4510" stroke-width="0.8"/>
<rect x="655.83" y="349.9" width="2.1" height="1.8" fill="#cf4510"/>
<line x1="658.36" y1="338.2" x2="658.36" y2="344.6" stroke="#cf4510" stroke-width="0.8"/>
<rect x="657.31" y="341.7" width="2.1" height="1.6" fill="#cf4510"/>
<line x1="659.84" y1="357.1" x2="659.84" y2="367.4" stroke="#cf4510" stroke-width="0.8"/>
<rect x="658.79" y="358.0" width="2.1" height="4.2" fill="#cf4510"/>
<line x1="661.32" y1="345.1" x2="661.32" y2="359.1" stroke="#cf4510" stroke-width="0.8"/>
<rect x="660.27" y="346.2" width="2.1" height="8.3" fill="#cf4510"/>
<line x1="662.79" y1="346.6" x2="662.79" y2="360.2" stroke="#cf4510" stroke-width="0.8"/>
<rect x="661.74" y="347.0" width="2.1" height="8.9" fill="#cf4510"/>
<line x1="664.27" y1="342.4" x2="664.27" y2="355.1" stroke="#878c16" stroke-width="0.8"/>
<rect x="663.12" y="343.3" width="2.3" height="11.3" fill="#9ea236" stroke="#878c16" stroke-width="0.7"/>
<line x1="665.75" y1="364.2" x2="665.75" y2="369.6" stroke="#cf4510" stroke-width="0.8"/>
<rect x="664.70" y="365.8" width="2.1" height="2.4" fill="#cf4510"/>
<line x1="667.23" y1="360.8" x2="667.23" y2="367.7" stroke="#878c16" stroke-width="0.8"/>
<rect x="666.08" y="363.1" width="2.3" height="2.5" fill="#9ea236" stroke="#878c16" stroke-width="0.7"/>
<line x1="668.70" y1="356.8" x2="668.70" y2="367.1" stroke="#878c16" stroke-width="0.8"/>
<rect x="667.55" y="359.2" width="2.3" height="7.0" fill="#9ea236" stroke="#878c16" stroke-width="0.7"/>
<line x1="670.18" y1="338.6" x2="670.18" y2="353.3" stroke="#878c16" stroke-width="0.8"/>
<rect x="669.03" y="339.6" width="2.3" height="8.6" fill="#9ea236" stroke="#878c16" stroke-width="0.7"/>
<line x1="671.66" y1="357.1" x2="671.66" y2="373.1" stroke="#cf4510" stroke-width="0.8"/>
<rect x="670.61" y="360.1" width="2.1" height="12.8" fill="#cf4510"/>
<line x1="673.13" y1="359.4" x2="673.13" y2="370.5" stroke="#cf4510" stroke-width="0.8"/>
<rect x="672.08" y="365.7" width="2.1" height="4.2" fill="#cf4510"/>
<line x1="674.61" y1="368.7" x2="674.61" y2="375.8" stroke="#cf4510" stroke-width="0.8"/>
<rect x="673.56" y="369.3" width="2.1" height="2.4" fill="#cf4510"/>
<line x1="676.09" y1="359.8" x2="676.09" y2="379.5" stroke="#878c16" stroke-width="0.8"/>
<rect x="674.94" y="362.8" width="2.3" height="13.8" fill="#9ea236" stroke="#878c16" stroke-width="0.7"/>
<line x1="677.57" y1="367.5" x2="677.57" y2="379.4" stroke="#cf4510" stroke-width="0.8"/>
<rect x="676.52" y="372.6" width="2.1" height="4.5" fill="#cf4510"/>
<line x1="679.04" y1="357.2" x2="679.04" y2="370.9" stroke="#cf4510" stroke-width="0.8"/>
<rect x="677.99" y="363.5" width="2.1" height="6.2" fill="#cf4510"/>
<line x1="680.52" y1="355.6" x2="680.52" y2="369.2" stroke="#878c16" stroke-width="0.8"/>
<rect x="679.37" y="355.6" width="2.3" height="9.8" fill="#9ea236" stroke="#878c16" stroke-width="0.7"/>
<line x1="682.00" y1="350.4" x2="682.00" y2="356.0" stroke="#878c16" stroke-width="0.8"/>
<rect x="680.85" y="351.2" width="2.3" height="4.4" fill="#9ea236" stroke="#878c16" stroke-width="0.7"/>
<line x1="683.48" y1="335.0" x2="683.48" y2="340.2" stroke="#cf4510" stroke-width="0.8"/>
<rect x="682.43" y="335.2" width="2.1" height="2.1" fill="#cf4510"/>
<line x1="684.95" y1="319.5" x2="684.95" y2="329.0" stroke="#878c16" stroke-width="0.8"/>
<rect x="683.80" y="319.5" width="2.3" height="8.2" fill="#9ea236" stroke="#878c16" stroke-width="0.7"/>
<line x1="686.43" y1="335.6" x2="686.43" y2="347.2" stroke="#878c16" stroke-width="0.8"/>
<rect x="685.28" y="339.0" width="2.3" height="4.7" fill="#9ea236" stroke="#878c16" stroke-width="0.7"/>
<line x1="687.91" y1="318.9" x2="687.91" y2="331.1" stroke="#878c16" stroke-width="0.8"/>
<rect x="686.76" y="322.3" width="2.3" height="7.1" fill="#9ea236" stroke="#878c16" stroke-width="0.7"/>
<line x1="689.38" y1="314.0" x2="689.38" y2="333.6" stroke="#cf4510" stroke-width="0.8"/>
<rect x="688.33" y="314.3" width="2.1" height="15.2" fill="#cf4510"/>
<line x1="690.86" y1="307.5" x2="690.86" y2="328.1" stroke="#878c16" stroke-width="0.8"/>
<rect x="689.71" y="310.9" width="2.3" height="16.8" fill="#9ea236" stroke="#878c16" stroke-width="0.7"/>
<line x1="692.29" y1="320.9" x2="692.29" y2="328.1" stroke="#878c16" stroke-width="0.8"/>
<rect x="691.14" y="324.5" width="2.3" height="3.4" fill="#9ea236" stroke="#878c16" stroke-width="0.7"/>
<line x1="693.66" y1="292.3" x2="693.66" y2="313.7" stroke="#878c16" stroke-width="0.8"/>
<rect x="692.51" y="292.3" width="2.3" height="17.1" fill="#9ea236" stroke="#878c16" stroke-width="0.7"/>
<line x1="695.04" y1="306.4" x2="695.04" y2="314.5" stroke="#878c16" stroke-width="0.8"/>
<rect x="693.89" y="310.4" width="2.3" height="4.1" fill="#9ea236" stroke="#878c16" stroke-width="0.7"/>
<line x1="696.42" y1="303.4" x2="696.42" y2="315.2" stroke="#878c16" stroke-width="0.8"/>
<rect x="695.27" y="305.7" width="2.3" height="5.6" fill="#9ea236" stroke="#878c16" stroke-width="0.7"/>
<line x1="697.79" y1="321.5" x2="697.79" y2="333.9" stroke="#cf4510" stroke-width="0.8"/>
<rect x="696.74" y="321.9" width="2.1" height="4.6" fill="#cf4510"/>
<line x1="699.17" y1="294.6" x2="699.17" y2="313.5" stroke="#878c16" stroke-width="0.8"/>
<rect x="698.02" y="297.3" width="2.3" height="15.7" fill="#9ea236" stroke="#878c16" stroke-width="0.7"/>
<line x1="700.55" y1="304.3" x2="700.55" y2="313.4" stroke="#cf4510" stroke-width="0.8"/>
<rect x="699.50" y="306.3" width="2.1" height="5.1" fill="#cf4510"/>
<line x1="701.92" y1="289.9" x2="701.92" y2="304.6" stroke="#878c16" stroke-width="0.8"/>
<rect x="700.77" y="296.1" width="2.3" height="5.4" fill="#9ea236" stroke="#878c16" stroke-width="0.7"/>
<line x1="703.30" y1="298.9" x2="703.30" y2="310.5" stroke="#878c16" stroke-width="0.8"/>
<rect x="702.15" y="300.9" width="2.3" height="8.9" fill="#9ea236" stroke="#878c16" stroke-width="0.7"/>
<line x1="704.67" y1="294.5" x2="704.67" y2="304.4" stroke="#878c16" stroke-width="0.8"/>
<rect x="703.52" y="296.6" width="2.3" height="7.7" fill="#9ea236" stroke="#878c16" stroke-width="0.7"/>
<line x1="706.05" y1="305.0" x2="706.05" y2="325.5" stroke="#cf4510" stroke-width="0.8"/>
<rect x="705.00" y="305.5" width="2.1" height="15.7" fill="#cf4510"/>
<line x1="707.43" y1="293.4" x2="707.43" y2="306.6" stroke="#878c16" stroke-width="0.8"/>
<rect x="706.28" y="294.8" width="2.3" height="10.8" fill="#9ea236" stroke="#878c16" stroke-width="0.7"/>
<line x1="708.80" y1="282.7" x2="708.80" y2="290.5" stroke="#878c16" stroke-width="0.8"/>
<rect x="707.65" y="284.3" width="2.3" height="5.1" fill="#9ea236" stroke="#878c16" stroke-width="0.7"/>
<line x1="710.18" y1="257.6" x2="710.18" y2="292.8" stroke="#cf4510" stroke-width="0.8"/>
<rect x="709.13" y="261.5" width="2.1" height="27.0" fill="#cf4510"/>
<line x1="711.55" y1="298.1" x2="711.55" y2="300.8" stroke="#cf4510" stroke-width="0.8"/>
<rect x="710.50" y="298.5" width="2.1" height="2.3" fill="#cf4510"/>
</g>
<path d="M18.4,282.8 C20.1,277.9 26.5,260.6 28.5,253.5 C30.5,246.4 29.7,247.2 30.5,240.0 C31.3,232.8 32.6,218.3 33.5,210.0 C34.4,201.7 34.9,196.7 36.0,190.0 C37.1,183.3 38.7,175.3 40.0,170.0 C41.3,164.7 42.7,161.8 44.0,158.0 C45.3,154.2 46.7,150.1 48.0,147.0 C49.3,143.9 49.4,139.1 52.0,139.5 C54.6,139.9 60.6,148.6 63.7,149.6 C66.8,150.6 65.8,148.9 70.4,145.4 C75.0,141.9 86.4,129.5 91.3,128.6 C96.2,127.7 97.4,136.1 100.0,140.0 C102.6,143.9 103.9,145.5 106.7,151.8 C109.5,158.1 112.3,173.6 116.8,177.8 C121.3,182.0 128.9,178.8 133.5,177.0 C138.1,175.2 140.6,166.1 144.4,166.9 C148.2,167.7 152.6,176.7 156.1,182.0 C159.6,187.3 162.4,191.4 165.3,198.7 C168.2,206.0 169.1,216.8 173.5,226.0 C177.9,235.2 186.3,245.7 191.9,253.7 C197.5,261.7 202.8,268.6 207.0,273.8 C211.2,279.0 214.2,283.4 217.0,284.6 C219.8,285.8 221.8,281.4 223.5,281.0 C225.2,280.6 224.2,280.5 227.0,282.0 C229.8,283.5 236.3,287.4 240.2,290.2 C244.1,293.0 247.0,294.7 250.3,298.6 C253.7,302.5 256.8,309.4 260.3,313.7 C263.8,318.0 267.9,325.9 271.2,324.5 C274.5,323.1 277.2,311.0 280.4,305.3 C283.6,299.6 287.1,291.8 290.5,290.2 C293.9,288.6 297.5,296.0 300.5,296.0 C303.5,296.0 305.4,295.9 308.4,290.0 C311.4,284.1 314.3,269.1 318.5,260.4 C322.7,251.7 329.6,241.0 333.5,237.7 C337.4,234.3 338.6,236.8 342.0,240.3 C345.4,243.8 350.6,253.1 353.7,258.7 C356.8,264.3 358.5,269.4 360.4,273.8 C362.3,278.2 362.1,280.8 365.1,285.2 C368.1,289.6 374.6,298.8 378.5,300.3 C382.4,301.8 386.1,294.8 388.6,294.4 C391.1,294.0 391.1,293.9 393.6,297.7 C396.1,301.5 400.6,311.8 403.7,317.0 C406.8,322.2 408.4,329.1 412.0,328.7 C415.6,328.3 420.1,314.2 425.4,314.5 C430.7,314.8 438.6,327.9 443.9,330.4 C449.2,332.9 452.9,330.5 457.3,329.6 C461.7,328.7 466.2,328.8 470.0,325.0 C473.8,321.2 476.6,311.9 480.1,307.0 C483.6,302.1 487.9,296.7 491.0,295.3 C494.1,293.9 495.3,295.4 498.5,298.7 C501.7,302.0 506.7,312.5 510.3,315.4 C513.9,318.3 516.9,316.9 520.3,316.3 C523.6,315.7 527.3,315.6 530.4,312.0 C533.5,308.4 534.8,291.5 538.7,294.5 C542.6,297.5 549.3,319.9 553.8,330.0 C558.3,340.1 562.1,351.4 565.5,355.3 C568.9,359.2 570.8,353.1 574.4,353.6 C578.0,354.2 582.7,361.4 587.0,358.6 C591.3,355.8 595.9,337.0 600.3,336.9 C604.7,336.8 609.2,353.8 613.6,357.8 C618.0,361.8 622.5,361.2 626.9,361.1 C631.3,361.0 636.5,360.4 640.2,357.0 C643.9,353.6 646.2,343.2 649.3,341.0 C652.4,338.8 653.7,340.1 658.6,343.6 C663.5,347.1 673.1,363.4 678.7,362.0 C684.3,360.6 688.8,341.3 692.1,335.2 C695.4,329.1 696.8,329.4 698.7,325.5 C700.7,321.6 701.7,315.8 703.8,312.0 C705.9,308.2 710.0,304.4 711.3,302.9" fill="none" stroke="#cc33cc" stroke-width="1.05" stroke-linejoin="round" stroke-linecap="round"/>
<path d="M6.3,296.0 C7.1,291.6 8.9,271.6 10.9,269.4 C12.9,267.2 16.6,284.1 18.4,282.8 C20.2,281.6 20.7,269.0 21.8,261.9 C22.9,254.8 24.3,244.2 25.1,240.0 C25.9,235.8 26.0,241.7 26.8,236.8 C27.6,231.9 29.1,224.0 30.2,210.4 C31.3,196.8 32.5,167.6 33.5,155.0 C34.5,142.4 35.2,139.4 36.0,135.0 C36.8,130.6 37.2,126.8 38.5,128.6 C39.8,130.4 41.4,147.0 43.5,146.0 C45.6,145.0 48.2,120.1 51.0,122.8 C53.8,125.5 57.3,158.7 60.3,162.0 C63.2,165.3 66.0,143.0 68.7,142.9 C71.4,142.8 73.7,164.2 76.2,161.3 C78.7,158.4 81.4,132.8 83.8,125.3 C86.2,117.8 87.7,110.5 90.5,116.0 C93.3,121.5 98.2,148.9 100.5,158.5 C102.8,168.1 102.5,172.2 104.2,173.6 C105.9,175.0 108.8,163.6 110.9,166.9 C113.0,170.2 115.4,190.3 116.8,193.7 C118.2,197.0 118.0,189.8 119.3,187.0 C120.5,184.2 121.8,180.2 124.3,177.0 C126.8,173.8 131.2,170.2 134.3,167.7 C137.4,165.2 140.3,160.6 142.7,161.9 C145.1,163.2 146.8,169.3 148.6,175.3 C150.4,181.3 152.2,194.4 153.6,197.9 C155.0,201.4 155.6,195.2 157.0,196.2 C158.4,197.2 160.4,199.8 162.0,203.8 C163.6,207.8 164.6,212.6 166.8,220.2 C169.0,227.8 172.7,245.7 175.1,249.5 C177.5,253.3 178.3,241.0 181.0,242.8 C183.7,244.6 188.8,257.8 191.0,260.4 C193.2,263.0 192.3,255.1 194.4,258.7 C196.5,262.3 201.4,277.9 203.6,282.0 C205.8,286.1 205.8,280.9 207.8,283.0 C209.9,285.1 213.2,296.1 215.9,294.4 C218.7,292.7 221.5,272.6 224.3,272.6 C227.1,272.6 230.5,290.6 232.7,294.4 C234.9,298.2 235.9,296.4 237.7,295.2 C239.5,293.9 241.8,286.3 243.6,286.9 C245.4,287.5 246.8,291.6 248.6,298.6 C250.4,305.6 252.3,323.5 254.4,328.7 C256.5,333.9 258.7,330.0 261.1,329.6 C263.5,329.2 266.3,329.4 268.7,326.2 C271.1,323.0 273.0,318.2 275.4,310.3 C277.8,302.4 280.9,282.8 282.9,278.5 C284.8,274.2 285.4,280.9 287.1,284.3 C288.8,287.7 290.9,294.6 293.0,298.6 C295.1,302.7 297.3,310.6 299.7,308.6 C302.1,306.7 304.6,296.0 307.2,286.9 C309.8,277.8 312.9,261.6 315.1,253.7 C317.3,245.8 318.5,240.1 320.2,239.4 C321.9,238.7 322.9,251.7 325.2,249.5 C327.5,247.3 331.4,227.0 333.9,226.0 C336.4,225.0 338.6,240.1 340.3,243.6 C342.1,247.1 342.5,240.5 344.4,247.0 C346.3,253.5 349.6,278.0 351.7,282.7 C353.8,287.4 354.6,271.8 356.8,275.1 C359.0,278.5 362.9,299.6 365.1,302.8 C367.3,306.0 368.7,295.1 370.2,294.4 C371.7,293.7 372.9,295.7 374.3,298.6 C375.8,301.5 376.5,313.9 378.9,312.0 C381.3,310.1 386.2,289.7 388.6,286.9 C391.1,284.1 391.7,291.0 393.6,295.2 C395.6,299.4 397.8,304.2 400.3,312.0 C402.8,319.8 406.2,339.0 408.7,342.1 C411.2,345.2 412.6,337.5 415.4,330.4 C418.2,323.3 422.8,302.5 425.4,299.4 C428.0,296.3 429.3,307.1 431.3,312.0 C433.3,316.9 435.2,323.5 437.2,328.7 C439.1,333.9 441.3,342.1 443.0,343.0 C444.7,343.9 445.5,337.6 447.2,333.8 C448.9,330.0 451.3,321.5 453.1,320.4 C454.9,319.3 456.0,327.0 458.1,327.0 C460.2,327.0 463.6,320.6 465.6,320.4 C467.6,320.1 467.6,330.2 470.0,325.5 C472.4,320.8 477.6,297.2 480.1,292.0 C482.6,286.8 483.4,294.9 485.1,294.5 C486.8,294.1 488.5,289.6 490.2,289.5 C491.9,289.4 492.4,287.7 495.2,293.7 C498.0,299.7 504.4,320.4 506.9,325.5 C509.4,330.6 508.5,327.0 510.3,324.6 C512.1,322.2 515.8,312.4 517.8,311.2 C519.8,309.9 520.3,316.5 522.0,317.1 C523.7,317.7 525.8,316.8 527.8,314.6 C529.8,312.4 531.9,309.7 533.7,303.7 C535.5,297.7 537.3,280.6 538.7,278.6 C540.1,276.7 540.8,281.4 542.1,292.0 C543.5,302.6 544.9,331.9 546.8,341.9 C548.7,351.9 551.5,349.8 553.5,352.0 C555.5,354.2 556.8,353.2 558.5,355.3 C560.2,357.4 562.0,363.7 563.5,364.5 C565.0,365.3 565.9,363.1 567.7,360.3 C569.5,357.5 572.3,348.5 574.4,347.7 C576.5,346.9 578.2,352.1 580.3,355.3 C582.4,358.5 585.0,368.4 587.0,367.0 C589.0,365.6 590.2,355.0 592.0,346.9 C593.8,338.8 596.3,321.8 597.8,318.4 C599.3,315.0 599.9,321.5 601.2,326.8 C602.5,332.1 603.5,341.2 605.4,350.3 C607.2,359.4 610.4,378.1 612.3,381.5 C614.2,384.9 615.3,375.3 616.8,370.4 C618.3,365.5 619.4,353.9 621.5,351.9 C623.6,349.9 627.2,358.5 629.3,358.6 C631.4,358.8 632.3,351.7 634.1,352.8 C635.9,353.9 637.6,370.8 640.0,365.3 C642.4,359.9 646.7,326.1 648.7,320.1 C650.7,314.1 650.8,324.8 651.9,329.3 C653.0,333.8 654.2,343.4 655.3,346.9 C656.4,350.4 657.5,348.9 658.6,350.3 C659.7,351.7 660.0,352.7 662.0,355.3 C664.0,357.9 667.9,364.5 670.4,366.2 C672.9,367.9 674.8,367.9 677.0,365.3 C679.2,362.7 681.5,356.2 683.8,350.3 C686.0,344.4 688.6,336.3 690.5,330.2 C692.4,324.1 693.7,317.0 695.4,313.8 C697.1,310.6 699.0,312.1 700.5,310.9 C702.0,309.7 703.6,307.9 704.7,306.7 C705.8,305.5 706.0,305.4 707.1,303.7 C708.2,301.9 710.6,297.4 711.3,296.2" fill="none" stroke="#2b2bef" stroke-width="1.15" stroke-linejoin="round" stroke-linecap="round"/>
<!-- trendlines -->
<line x1="6" y1="81" x2="742" y2="176" stroke="#ee2222" stroke-width="1.6"/>
<line x1="60" y1="81.6" x2="719.7" y2="298.2" stroke="#f49090" stroke-width="1.3"/>
<circle cx="60" cy="81.6" r="2.25" fill="#fff" stroke="#666" stroke-width="1"/>
<circle cx="719.7" cy="298.2" r="2.25" fill="#fff" stroke="#666" stroke-width="1"/>
<line x1="633.1" y1="297.5" x2="731.4" y2="245.4" stroke="#22aa22" stroke-width="1.5"/>
<line x1="605.9" y1="395.8" x2="695.1" y2="368.3" stroke="#22aa22" stroke-width="1.5"/>
<circle cx="633.1" cy="297.5" r="2.25" fill="#fff" stroke="#666" stroke-width="1"/>
<circle cx="731.4" cy="245.4" r="2.25" fill="#fff" stroke="#666" stroke-width="1"/>
<circle cx="605.9" cy="395.8" r="2.25" fill="#fff" stroke="#666" stroke-width="1"/>
<circle cx="695.1" cy="368.3" r="2.25" fill="#fff" stroke="#666" stroke-width="1"/>
<!-- axis labels -->
<text x="745" y="70.2" class="ax" textLength="26.5" lengthAdjust="spacingAndGlyphs">52.00</text>
<text x="745" y="87.2" class="ax" textLength="26.5" lengthAdjust="spacingAndGlyphs">48.00</text>
<text x="745" y="105.8" class="ax" textLength="26.5" lengthAdjust="spacingAndGlyphs">44.00</text>
<text x="745" y="126.1" class="ax" textLength="26.5" lengthAdjust="spacingAndGlyphs">40.00</text>
<text x="745" y="148.5" class="ax" textLength="26.5" lengthAdjust="spacingAndGlyphs">36.00</text>
<text x="745" y="173.6" class="ax" textLength="26.5" lengthAdjust="spacingAndGlyphs">32.00</text>
<text x="745" y="202.1" class="ax" textLength="26.5" lengthAdjust="spacingAndGlyphs">28.00</text>
<text x="745" y="234.9" class="ax" textLength="26.5" lengthAdjust="spacingAndGlyphs">24.00</text>
<text x="745" y="273.7" class="ax" textLength="26.5" lengthAdjust="spacingAndGlyphs">20.00</text>
<text x="745" y="321.3" class="ax" textLength="26.5" lengthAdjust="spacingAndGlyphs">16.00</text>
<text x="745" y="382.5" class="ax" textLength="26.5" lengthAdjust="spacingAndGlyphs">12.00</text>
<rect x="745" y="276.4" width="29.5" height="13.8" rx="2.5" fill="#fff" stroke="#444" stroke-width="1"/>
<text x="748" y="286.8" font-size="9.6" fill="#222" stroke="#222" stroke-width="0.15" textLength="24" lengthAdjust="spacingAndGlyphs">18.89</text>
<polygon points="736.5,89 742,86 742,92" fill="#c8c8c8"/>
<polygon points="736.5,401 742,398 742,404" fill="#c8c8c8"/>
<polygon points="720.5,451.5 717.5,456 723.5,456" fill="#c8c8c8"/>
<!-- separator -->
<rect x="6" y="459.6" width="736" height="2" fill="#9a9a9a"/>
<!-- stoch -->
<polyline points="31.8,480.0 33.5,520.0 35.2,510.0 39.4,563.3 41.9,561.6 44.4,535.8 46.9,540.0 48.6,560.8 51.1,549.1 52.8,563.3 55.3,557.5 57.8,563.3 61.1,519.2 63.7,550.8 67.0,485.8 72.0,563.3 74.5,538.3 77.9,480.0 80.4,480.0 82.9,511.7 84.6,486.7 86.3,516.7 87.9,480.0 93.0,563.3 100.5,563.3 103.0,527.5 104.7,538.3 107.2,522.5 108.9,540.0 111.4,493.3 115.6,563.3 118.9,480.0 121.7,510.0 125.9,535.0 127.5,480.0 130.0,518.3 132.6,510.0 135.1,493.3 136.8,491.7 137.6,521.6 140.1,503.3 140.9,521.6 143.5,491.7 146.8,563.3 150.2,563.3 156.0,503.3 157.7,563.3 161.9,550.8 164.4,563.3 166.9,547.5 168.6,563.3 171.9,563.3 178.6,480.0 183.7,533.3 187.0,518.3 189.5,530.0 192.9,480.0 197.0,563.3 202.1,540.0 205.4,506.7 207.9,533.3 211.3,563.3 213.8,518.3 217.2,480.0 222.2,480.0 225.5,528.3 228.9,511.7 231.4,531.6 235.6,513.3 238.1,547.5 241.4,480.0 245.6,547.5 247.5,563.3 250.9,552.5 253.4,563.3 255.9,540.0 258.4,545.0 259.2,536.6 261.8,557.5 263.4,485.0 266.8,481.7 269.3,480.0 276.8,480.0 279.3,533.3 281.9,486.7 284.4,506.7 287.7,528.3 289.4,510.0 292.7,560.8 295.3,563.3 296.9,541.6 299.5,554.1 302.8,480.0 304.5,490.0 307.0,480.0 308.7,523.3 311.2,480.0 317.0,480.0 317.9,536.6 321.2,549.1 322.9,563.3 325.4,563.3 327.1,525.0 329.6,497.5 331.3,525.0 333.8,563.3 336.3,563.3 338.8,533.3 341.3,525.0 343.0,563.3 348.0,563.3 350.5,535.0 353.0,514.2 355.6,523.3 357.2,521.6 360.6,554.1 363.9,523.3 367.3,485.0 369.8,495.0 372.3,543.3 375.0,510.0 377.5,563.3 380.0,480.0 381.7,480.0 385.9,536.6 389.3,501.7 390.9,506.7 393.5,549.1 396.0,541.6 397.6,563.3 401.8,563.3 403.5,533.3 406.0,540.0 407.7,560.8 411.9,480.0 414.4,503.3 416.1,480.0 421.9,480.0 425.3,503.3 427.8,563.3 430.3,518.3 433.7,563.3 436.2,550.8 438.7,560.8 441.2,554.1 444.5,480.0 447.1,480.0 448.7,549.1 451.2,495.0 453.8,525.0 456.3,543.3 459.6,493.3 462.1,518.3 463.8,500.8 466.3,536.6 469.7,538.3 471.3,480.0 474.7,480.0 477.2,505.0 479.7,490.0 481.4,549.1 487.3,500.0 492.3,563.3 496.5,531.6 497.5,563.3 500.9,557.5 502.5,560.0 505.9,538.3 509.2,563.3 513.4,480.0 515.1,505.0 516.8,500.0 521.0,545.0 525.2,480.0 527.7,547.5 529.3,480.0 537.7,480.0 540.2,563.3 560.0,563.3 561.6,522.5 564.7,480.0 566.2,496.7 567.7,480.0 569.3,480.0 570.8,533.3 572.4,480.0 573.9,504.2 575.5,509.2 577.0,513.3 578.5,522.5 580.9,528.3 582.4,542.5 584.7,560.0 587.0,562.5 588.6,480.0 590.9,480.0 591.7,515.0 593.2,480.0 594.8,515.0 596.3,535.0 597.8,525.8 599.4,527.5 601.7,544.1 604.0,546.6 607.1,558.3 608.6,562.5 611.4,563.3 615.6,483.3 616.7,525.0 618.4,485.0 620.9,496.7 623.4,520.0 625.1,513.3 626.7,488.3 628.4,516.7 630.9,480.0 633.4,496.7 636.8,560.8 640.1,563.3 641.8,480.0 643.5,535.0 646.0,490.0 650.2,541.6 656.9,540.0 659.4,523.3 660.2,561.6 665.3,560.8 667.8,528.3 669.4,563.3 672.8,545.0 675.3,520.0 677.0,563.3 679.5,480.0 682.0,480.0 683.7,485.0 685.4,480.0 693.7,480.0 697.1,547.5 701.3,491.7 702.1,557.5 704.6,538.3 707.1,552.5 709.6,488.3 711.3,530.0" fill="none" stroke="#ff20ff" stroke-width="1.3" stroke-linejoin="round" stroke-linecap="round"/>
<path d="M41.9,528.3 C42.3,529.6 44.4,537.3 45.2,540.0 C46.0,542.7 48.4,551.1 49.4,552.5 C50.4,553.9 53.3,551.8 54.4,552.5 C55.5,553.1 58.5,558.2 59.5,558.3 C60.5,558.4 62.5,556.3 63.7,553.3 C64.9,550.3 69.2,533.5 70.4,531.6 C71.6,529.8 73.6,537.4 74.5,536.6 C75.4,535.9 77.8,526.8 78.7,525.0 C79.6,523.1 81.8,523.6 82.9,520.0 C84.0,516.4 87.3,492.1 88.8,492.5 C90.3,492.9 94.7,516.1 96.3,523.3 C97.9,530.5 101.6,555.6 103.0,557.5 C104.4,559.3 107.7,543.1 108.9,540.0 C110.1,536.8 112.8,531.0 113.9,529.1 C115.0,527.3 118.2,524.3 118.9,523.3 C119.6,522.3 119.5,520.9 120.0,520.0 C120.5,519.1 122.7,515.2 123.4,515.0 C124.1,514.8 125.3,519.7 125.9,518.3 C126.5,516.9 128.4,503.5 129.2,502.5 C130.0,501.5 132.3,509.0 133.4,509.2 C134.5,509.3 138.2,504.6 139.3,504.2 C140.4,503.7 142.4,502.5 143.5,505.0 C144.6,507.5 147.7,521.4 149.3,526.6 C150.9,531.9 156.2,549.7 157.7,552.5 C159.2,555.2 161.7,551.6 162.7,551.6 C163.7,551.6 166.0,551.5 166.9,552.5 C167.8,553.5 170.0,562.2 171.1,560.8 C172.2,559.4 175.8,544.7 177.0,540.0 C178.2,535.3 180.9,521.7 182.0,518.3 C183.1,514.9 185.9,509.5 187.0,509.2 C188.1,508.8 190.7,513.0 192.0,515.0 C193.3,516.9 197.2,524.0 198.7,526.6 C200.2,529.3 204.1,538.1 205.4,539.1 C206.7,540.2 209.1,538.3 210.5,535.8 C211.9,533.3 216.5,520.7 218.0,516.7 C219.5,512.6 222.9,500.9 223.9,499.2 C224.9,497.4 226.2,499.2 227.2,500.8 C228.2,502.5 231.8,511.2 233.1,514.2 C234.4,517.1 237.7,526.6 238.9,527.5 C240.1,528.4 242.9,521.6 244.0,522.5 C245.1,523.3 248.3,533.4 249.2,535.0 C250.1,536.6 250.9,534.5 251.7,536.6 C252.5,538.8 255.6,552.9 256.7,554.1 C257.8,555.3 260.5,551.5 261.8,547.5 C263.1,543.5 266.9,525.7 268.5,518.3 C270.1,510.9 274.5,484.0 276.0,480.8 C277.5,480.5 280.4,487.1 281.9,490.0 C283.4,492.9 287.4,500.4 289.4,506.7 C291.4,512.9 298.5,543.3 300.3,546.6 C302.1,550.0 303.8,543.1 305.3,536.6 C306.8,530.2 312.4,493.9 313.7,488.3 C315.0,482.8 316.1,484.7 317.0,486.7 C317.9,488.6 320.6,500.0 322.0,505.8 C323.4,511.7 328.5,535.7 329.6,539.1 C330.7,542.6 331.2,536.9 332.1,536.6 C333.0,536.4 336.5,534.6 338.0,536.6 C339.5,538.7 344.2,553.1 345.5,555.0 C346.8,556.8 348.3,555.2 349.7,553.3 C351.1,551.5 356.5,540.4 358.1,538.3 C359.7,536.2 362.5,535.7 363.9,534.1 C365.3,532.6 369.4,525.5 370.6,524.1 C371.8,522.8 374.0,521.1 375.0,521.6 C376.0,522.2 378.1,529.0 379.2,529.1 C380.3,529.3 383.8,525.8 385.1,523.3 C386.4,520.8 389.3,505.5 390.9,506.7 C392.5,507.8 397.9,528.6 399.3,533.3 C400.7,538.0 402.5,547.0 403.5,549.1 C404.5,551.3 406.3,559.8 408.5,552.5 C410.7,545.2 421.0,488.2 423.6,483.3 C426.2,480.5 430.3,501.8 432.0,508.3 C433.7,514.9 437.4,537.4 438.7,542.5 C440.0,547.6 442.6,555.0 443.7,554.1 C444.8,553.3 447.4,539.5 448.7,535.0 C450.0,530.4 454.2,515.3 455.4,513.3 C456.6,511.4 458.9,517.4 459.6,517.5 C460.3,517.6 460.3,514.0 461.3,514.2 C462.3,514.3 467.6,519.1 468.8,519.2 C470.0,519.2 470.8,516.7 472.2,515.0 C473.6,513.2 479.4,502.8 481.4,503.3 C483.4,503.9 489.2,517.0 490.6,520.0 C492.0,522.9 493.0,527.4 494.0,530.0 C495.0,532.6 499.0,540.5 500.0,543.3 C501.0,546.1 502.7,554.0 503.4,555.0 C504.1,555.9 505.3,551.5 505.9,551.6 C506.5,551.7 508.0,559.1 509.2,555.8 C510.4,552.5 515.0,526.8 516.8,521.6 C518.6,516.5 524.0,509.8 525.2,509.2 C526.4,508.5 526.4,517.9 527.7,515.8 C529.0,513.7 535.5,492.3 536.9,490.0 C538.3,487.7 538.6,487.0 540.2,495.0 C541.8,503.0 548.9,554.2 551.1,561.6 C553.3,563.0 558.4,563.0 560.0,561.6 C561.6,559.3 564.3,545.7 565.4,540.8 C566.5,535.9 568.9,522.5 570.0,517.5 C571.1,512.5 574.5,497.2 575.5,495.8 C576.5,494.4 578.4,502.6 579.3,505.0 C580.2,507.4 582.3,514.1 583.2,517.5 C584.1,520.9 585.9,535.4 587.0,535.8 C588.1,536.2 591.7,523.8 593.2,520.8 C594.7,517.9 598.7,506.9 600.2,509.2 C601.7,511.4 606.0,536.6 607.1,540.8 C608.2,545.1 609.3,545.9 610.0,547.5 C610.7,549.0 612.2,555.8 613.1,555.0 C614.0,554.1 616.5,545.8 618.1,540.0 C619.7,534.1 626.1,506.9 627.6,502.5 C629.1,498.0 630.9,499.3 631.8,500.0 C632.7,500.6 634.9,505.4 635.9,508.3 C636.9,511.3 640.0,524.1 641.0,526.6 C642.0,529.1 643.8,531.5 645.2,530.8 C646.6,530.2 652.4,521.4 653.5,520.8 C654.6,520.3 654.4,523.2 655.2,525.8 C656.0,528.4 659.8,541.4 661.1,544.1 C662.4,546.9 665.8,549.3 667.0,550.8 C668.2,552.3 670.9,557.7 672.0,557.5 C673.1,557.2 675.3,555.1 677.0,548.3 C678.7,541.5 685.3,504.2 687.0,496.7 C688.7,489.2 691.2,482.0 692.1,480.8 C693.0,480.5 694.5,483.3 695.4,485.8 C696.3,488.3 698.9,497.5 700.4,503.3 C701.9,509.2 707.6,535.1 708.8,538.3 C710.0,541.5 711.0,533.1 711.3,532.5" fill="none" stroke="#2c2cc8" stroke-width="1.4" stroke-linejoin="round" stroke-linecap="round"/>
<text x="744.5" y="483.3" class="sax" textLength="32.4" lengthAdjust="spacingAndGlyphs">100.00</text>
<text x="744.5" y="500.0" class="sax" textLength="26.5" lengthAdjust="spacingAndGlyphs">80.00</text>
<text x="744.5" y="516.6" class="sax" textLength="26.5" lengthAdjust="spacingAndGlyphs">60.00</text>
<text x="744.5" y="549.9" class="sax" textLength="26.5" lengthAdjust="spacingAndGlyphs">20.00</text>
<text x="744.5" y="566.6" class="sax" textLength="21" lengthAdjust="spacingAndGlyphs">0.00</text>
<rect x="744" y="525" width="30" height="12.5" rx="2.5" fill="#fff" stroke="#444" stroke-width="1"/>
<text x="746.5" y="534.8" font-size="9.6" fill="#222" stroke="#222" stroke-width="0.15" textLength="25" lengthAdjust="spacingAndGlyphs">40.00</text>
<polygon points="737,480 742.5,477 742.5,483" fill="#c8c8c8"/>
<polygon points="737,563.6 742.5,560.6 742.5,566.6" fill="#c8c8c8"/>
<text x="25.3" y="577.8" class="mo" text-anchor="middle">Aug</text>
<text x="59" y="577.8" class="mo" text-anchor="middle">Sep</text>
<text x="88.8" y="577.8" class="mo" text-anchor="middle">Oct</text>
<text x="119" y="577.8" class="mo" text-anchor="middle">Nov</text>
<text x="150.5" y="577.8" class="mo" text-anchor="middle">Dec</text>
<text x="180.6" y="577.8" class="mo" text-anchor="middle">Jan</text>
<text x="208.6" y="577.8" class="mo" text-anchor="middle">Feb</text>
<text x="237.8" y="577.8" class="mo" text-anchor="middle">Mar</text>
<text x="269.2" y="577.8" class="mo" text-anchor="middle">Apr</text>
<text x="298" y="577.8" class="mo" text-anchor="middle">May</text>
<text x="330.6" y="577.8" class="mo" text-anchor="middle">Jun</text>
<text x="360.5" y="577.8" class="mo" text-anchor="middle">Jul</text>
<text x="390.9" y="577.8" class="mo" text-anchor="middle">Aug</text>
<text x="423.9" y="577.8" class="mo" text-anchor="middle">Sep</text>
<text x="451.4" y="577.8" class="mo" text-anchor="middle">Oct</text>
<text x="482.2" y="577.8" class="mo" text-anchor="middle">Nov</text>
<text x="512.6" y="577.8" class="mo" text-anchor="middle">Dec</text>
<text x="541" y="577.8" class="mo" text-anchor="middle">Jan</text>
<text x="571.3" y="577.8" class="mo" text-anchor="middle">Feb</text>
<text x="598.8" y="577.8" class="mo" text-anchor="middle">Mar</text>
<text x="628" y="577.8" class="mo" text-anchor="middle">Apr</text>
<text x="659.1" y="577.8" class="mo" text-anchor="middle">May</text>
<text x="7.2" y="589.4" font-size="9.5" fill="#222" textLength="9.1" lengthAdjust="spacingAndGlyphs">11</text>
<text x="179.8" y="589.5" font-size="9.5" fill="#333" text-anchor="middle">2012</text>
<text x="540.5" y="589.5" font-size="9.5" fill="#333" text-anchor="middle">2013</text>
<text x="682.6" y="584" font-size="9" fill="#222" textLength="38.7" lengthAdjust="spacingAndGlyphs">6/21/2013</text>
<!-- X box -->
<rect x="9.3" y="464.6" width="13.2" height="12.8" rx="2" fill="#fff" stroke="#8a8a8a" stroke-width="1"/>
<text x="12.6" y="474.6" font-size="10" fill="#666" stroke="#666" stroke-width="0.25" textLength="7.2" lengthAdjust="spacingAndGlyphs">X</text>
<text x="31.7" y="476.3" font-size="9.6" fill="#ff22ff" stroke="#ff22ff" stroke-width="0.2" textLength="85" lengthAdjust="spacingAndGlyphs">Stochastics RSI 14</text>
<polygon points="122.5,471 128,471 125.2,475" fill="#888"/>
<text x="134.2" y="476.3" font-size="9.6" fill="#2a2ab4" stroke="#2a2ab4" stroke-width="0.2" textLength="80.4" lengthAdjust="spacingAndGlyphs">Moving Average 9</text>
<polygon points="220.5,471 226.4,471 223.4,475" fill="#888"/>
<!-- header row 3 -->
<text x="13.2" y="55.2" font-size="9.6" fill="#3a8a3a" stroke="#3a8a3a" stroke-width="0.2" textLength="56.8" lengthAdjust="spacingAndGlyphs">Price History</text>
<polygon points="74.6,49.5 80.7,49.5 77.6,54" fill="#888"/>
<text x="86.8" y="55.2" font-size="9.6" fill="#dd22dd" stroke="#dd22dd" stroke-width="0.2" textLength="104" lengthAdjust="spacingAndGlyphs">FW Moving Average 21</text>
<polygon points="196.6,49.5 202.4,49.5 199.5,54" fill="#888"/>
<text x="209" y="55.2" font-size="9.6" fill="#2222dd" stroke="#2222dd" stroke-width="0.2" textLength="81" lengthAdjust="spacingAndGlyphs">Moving Average 6</text>
<polygon points="294.5,49.5 300.5,49.5 297.5,54" fill="#888"/>
<!-- toolbar contents -->
<text x="11.2" y="25.8" style="font-family:'Liberation Serif',serif" font-size="12" fill="#f2f200" stroke="#f2f200" stroke-width="0.35" textLength="36.6" lengthAdjust="spacingAndGlyphs">VIX--X</text>
<rect x="54" y="13" width="1.4" height="12" fill="#a2b6c6" opacity="0.5"/>
<text x="63" y="25.2" font-size="10" fill="#1c1c1c" stroke="#1c1c1c" stroke-width="0.05" textLength="58.4" lengthAdjust="spacingAndGlyphs">Add Indicator</text>
<rect x="130.3" y="13" width="1.4" height="12" fill="#a2b6c6" opacity="0.5"/>
<text x="139" y="25.2" font-size="10" fill="#1c1c1c" stroke="#1c1c1c" stroke-width="0.05" textLength="21.4" lengthAdjust="spacingAndGlyphs">Daily</text>
<polygon points="204.8,19.5 210.6,19.5 207.7,24" fill="#111"/>
<rect x="218.5" y="13" width="1.4" height="12" fill="#a2b6c6" opacity="0.5"/>
<text x="227.6" y="25.2" font-size="10" fill="#1c1c1c" stroke="#1c1c1c" stroke-width="0.05" textLength="35.4" lengthAdjust="spacingAndGlyphs">Settings</text>
<rect x="270" y="13" width="1.4" height="12" fill="#a2b6c6" opacity="0.5"/>
<rect x="294.8" y="13" width="1.4" height="12" fill="#a2b6c6" opacity="0.5"/>
<rect x="319" y="13" width="1.4" height="12" fill="#a2b6c6" opacity="0.5"/>
<rect x="342" y="13" width="1.4" height="12" fill="#a2b6c6" opacity="0.5"/>
<rect x="367" y="13" width="1.4" height="12" fill="#a2b6c6" opacity="0.5"/>
<rect x="391" y="13" width="1.4" height="12" fill="#a2b6c6" opacity="0.5"/>
<text x="10.7" y="41" font-size="8.6" fill="#2a2a2a" stroke="#2a2a2a" stroke-width="0.1" textLength="107.6" lengthAdjust="spacingAndGlyphs">CBOE Market Volatility Index</text>
<text x="123.6" y="41" font-size="8.6" fill="#5f80c8" stroke="#5f80c8" stroke-width="0.25" textLength="58.2" lengthAdjust="spacingAndGlyphs">Add to Portfolio</text>
<text x="192.5" y="41" font-size="8.6" fill="#85621e" stroke="#85621e" stroke-width="0.25" textLength="34.5" lengthAdjust="spacingAndGlyphs">Drawings</text>
<!-- icons -->
<g>
<circle cx="279.6" cy="17.6" r="2" fill="#e83018"/>
<circle cx="288.2" cy="17.6" r="2" fill="#e83018"/>
<circle cx="283.9" cy="22" r="5.6" fill="#ee3a1a"/>
<circle cx="283.9" cy="22.2" r="3.7" fill="#e8f8fc"/>
<circle cx="283.5" cy="23.5" r="1.6" fill="#b8ecf8"/>
<path d="M281.6,20.6 L283.9,23.2 L286.2,20.6" stroke="#333" stroke-width="1.1" fill="none"/>
<rect x="279.3" y="26.6" width="1.6" height="1.3" fill="#c02010"/>
<rect x="286.9" y="26.6" width="1.6" height="1.3" fill="#c02010"/>
</g>
<g>
<rect x="306" y="16.2" width="8" height="9.5" fill="#5a6a90"/>
<rect x="306" y="16.2" width="6" height="9.5" fill="#9aa6d8"/>
<rect x="302.2" y="18.1" width="7.5" height="9.5" rx="1.2" fill="#b4aef0"/>
<rect x="308.4" y="18.6" width="1.6" height="8.8" fill="#506090"/>
<path d="M303,20.5 h5 M303,23 h5 M303,25.5 h5" stroke="#e0dcff" stroke-width="0.8"/>
</g>
<g>
<path d="M326.3,16.3 q0,-1.3 1.3,-1.3 h1.8 q1.3,0 1.3,1.3 v3 h4.3 q1.3,0 1.3,1.3 v1 q0,1.3 -1.3,1.3 h-4.3 v0.8 q0,1.2 1.2,1.2 h3.1 q1.3,0 1.3,1.3 v1 q0,1.3 -1.3,1.3 h-4.3 q-4.5,0 -4.5,-4.5 z" fill="#38d4ee" stroke="#fff" stroke-width="0.9"/>
<rect x="327.2" y="15.8" width="2.6" height="4" fill="#8ee4f6"/>
</g>
<g>
<rect x="349.3" y="15.3" width="12.8" height="13.2" rx="1.2" fill="#f4f4fa"/>
<rect x="350.3" y="16.3" width="10.8" height="11.2" fill="#5a3fa0"/>
<rect x="351" y="17" width="9.4" height="9.8" fill="#34557e"/>
<path d="M357.6,28 v-7.5 q0,-2.4 2.6,-2.4" stroke="#fff" stroke-width="1.6" fill="none"/>
<path d="M355.6,22.2 h4" stroke="#fff" stroke-width="1.2"/>
<path d="M350.8,26.6 h4" stroke="#9aa0d0" stroke-width="0.8"/>
</g>
<g>
<ellipse cx="376.2" cy="22" rx="2.2" ry="3.6" fill="#8a82c8"/>
<ellipse cx="380.5" cy="21.8" rx="3.6" ry="3.8" fill="#5a5a60"/>
<ellipse cx="383.2" cy="22.6" rx="2.8" ry="3" fill="#4a4a50"/>
<circle cx="380.6" cy="21.8" r="1.6" fill="#fff"/>
<circle cx="383.3" cy="23" r="1.2" fill="#1a4a8a"/>
<circle cx="378.4" cy="19.2" r="1.1" fill="#d8d8d8"/>
</g>
<g>
<polygon points="397.8,18.2 405.9,16.4 409.7,24 401.6,27.5" fill="#ecec9a" stroke="#f4f040" stroke-width="1.1"/>
<path d="M400.5,20.5 l4.6,-1 M401.6,22.6 l4.8,-1.1 M402.6,24.6 l4.4,-1" stroke="#c8c890" stroke-width="0.7"/>
</g>
<!-- change -->
<path d="M701.5,16.6 h3 v6 h2.5 l-4,5 l-4,-5 h2.5 z" fill="#e02020"/>
<text x="709" y="26.5" font-size="10.6" fill="#f03030" stroke="#f03030" stroke-width="0.3" textLength="70.4" lengthAdjust="spacingAndGlyphs">-1.60 (-7.81%)</text>
<!-- borders -->
<rect x="3" y="7" width="2.9" height="586.5" fill="#000"/>
<rect x="781" y="9" width="1.8" height="129" fill="#b8c0c8"/>
<rect x="781" y="138" width="2" height="12" fill="#000"/>
<rect x="781" y="150" width="2" height="60.5" fill="#3050b0"/>
<rect x="781" y="210.5" width="1.8" height="147.5" fill="#d4d4d4"/>
<rect x="781" y="357.7" width="2" height="240" fill="#000"/>
<rect x="5.8" y="591" width="16.6" height="2" fill="#9a9a9a"/>
<rect x="22.4" y="591" width="727" height="2.6" fill="#a8dde6"/>
</svg>
</body></html>
